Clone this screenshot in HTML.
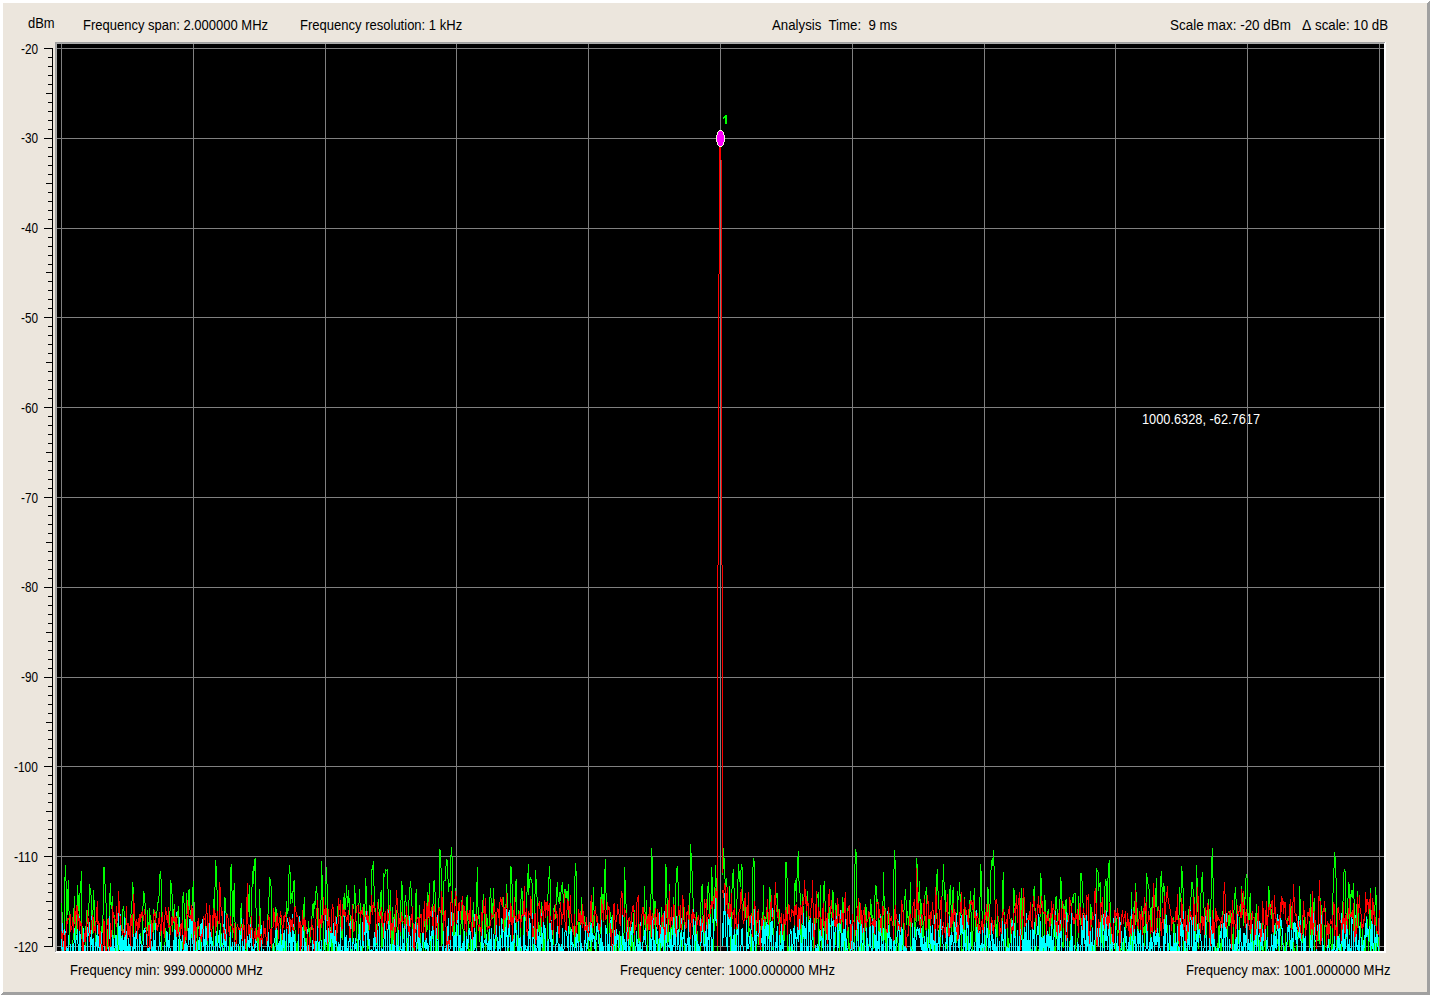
<!DOCTYPE html><html><head><meta charset="utf-8"><style>html,body{margin:0;padding:0;background:#ECE6DD;}body{width:1430px;height:995px;overflow:hidden;position:relative}svg{position:absolute;left:0;top:0}text{font-family:"Liberation Sans",sans-serif;font-size:14px}</style></head><body><svg width="1430" height="995" viewBox="0 0 1430 995" shape-rendering="crispEdges"><rect x="0" y="0" width="1430" height="995" fill="#ECE6DD"/><polygon fill="#FFFFFF" points="0,0 1430,0 1427,3 3,3 3,992 0,995"/><polygon fill="#A0A0A0" points="1430,0 1430,995 0,995 3,992 1427,992 1427,3"/><rect x="55" y="42" width="1331" height="911" fill="#FFFFFF"/><rect x="55" y="42" width="1330" height="910" fill="#A0A0A0"/><rect x="56" y="43" width="1329" height="909" fill="#FFFFFF"/><rect x="56" y="43" width="1328" height="908" fill="#ABABAB"/><rect x="57" y="44" width="1327" height="907" fill="#000000"/><text x="1142" y="424" textLength="118.04" lengthAdjust="spacingAndGlyphs" fill="#FFFFFF">1000.6328, -62.7617</text><path fill="#808080" d="M57 48h1327v1h-1327zM61 44h1v907h-1zM57 138h1327v1h-1327zM193 44h1v907h-1zM57 228h1327v1h-1327zM325 44h1v907h-1zM57 317h1327v1h-1327zM456 44h1v907h-1zM57 407h1327v1h-1327zM588 44h1v907h-1zM57 497h1327v1h-1327zM720 44h1v907h-1zM57 587h1327v1h-1327zM852 44h1v907h-1zM57 677h1327v1h-1327zM984 44h1v907h-1zM57 766h1327v1h-1327zM1115 44h1v907h-1zM57 856h1327v1h-1327zM1247 44h1v907h-1zM57 946h1327v1h-1327zM1379 44h1v907h-1z"/><path fill="#00FF00" d="M61 903h1v9h-1zM62 912h1v39h-1zM63 941h1v10h-1zM64 877h1v64h-1zM65 865h1v16h-1zM66 881h1v52h-1zM67 889h1v26h-1zM68 880h1v31h-1zM69 911h1v34h-1zM70 945h1v6h-1zM72 940h1v11h-1zM73 908h1v32h-1zM74 896h1v28h-1zM75 924h1v17h-1zM76 912h1v22h-1zM77 885h1v27h-1zM78 895h1v16h-1zM79 893h1v25h-1zM80 881h1v12h-1zM81 871h1v55h-1zM82 926h1v25h-1zM85 926h1v25h-1zM86 910h1v16h-1zM87 914h1v10h-1zM88 903h1v13h-1zM89 884h1v19h-1zM90 888h1v7h-1zM91 895h1v47h-1zM92 910h1v24h-1zM93 890h1v20h-1zM94 900h1v26h-1zM95 926h1v25h-1zM99 941h1v10h-1zM100 942h1v2h-1zM101 926h1v16h-1zM102 915h1v18h-1zM103 867h1v48h-1zM104 867h1v17h-1zM105 884h1v19h-1zM106 903h1v26h-1zM107 929h1v20h-1zM108 919h1v31h-1zM109 893h1v26h-1zM110 883h1v22h-1zM111 902h1v7h-1zM112 896h1v55h-1zM113 935h1v16h-1zM114 915h1v23h-1zM115 938h1v13h-1zM116 947h1v4h-1zM117 923h1v24h-1zM118 911h1v40h-1zM120 925h1v26h-1zM121 936h1v15h-1zM122 909h1v42h-1zM123 906h1v5h-1zM124 911h1v7h-1zM125 918h1v22h-1zM126 940h1v11h-1zM130 914h1v37h-1zM131 901h1v13h-1zM132 882h1v19h-1zM133 887h1v64h-1zM139 937h1v14h-1zM140 933h1v11h-1zM141 941h1v10h-1zM142 906h1v35h-1zM143 891h1v15h-1zM144 893h1v10h-1zM145 903h1v26h-1zM146 929h1v5h-1zM147 910h1v21h-1zM148 922h1v12h-1zM149 908h1v28h-1zM150 915h1v26h-1zM151 941h1v10h-1zM152 947h1v4h-1zM153 909h1v38h-1zM154 920h1v10h-1zM155 912h1v9h-1zM156 911h1v7h-1zM157 902h1v9h-1zM158 896h1v7h-1zM159 874h1v22h-1zM160 871h1v8h-1zM161 879h1v71h-1zM162 950h1v1h-1zM164 942h1v9h-1zM165 928h1v14h-1zM166 942h1v9h-1zM168 947h1v4h-1zM169 911h1v36h-1zM170 880h1v31h-1zM171 883h1v11h-1zM172 894h1v38h-1zM173 909h1v14h-1zM174 904h1v38h-1zM175 942h1v9h-1zM176 918h1v33h-1zM177 911h1v7h-1zM178 906h1v31h-1zM179 937h1v14h-1zM181 949h1v2h-1zM182 896h1v53h-1zM183 892h1v11h-1zM184 903h1v48h-1zM185 919h1v32h-1zM186 893h1v26h-1zM187 915h1v16h-1zM188 890h1v26h-1zM189 889h1v21h-1zM190 910h1v30h-1zM191 906h1v32h-1zM192 887h1v19h-1zM193 881h1v21h-1zM194 902h1v34h-1zM195 936h1v15h-1zM196 941h1v10h-1zM197 924h1v27h-1zM198 925h1v4h-1zM199 929h1v7h-1zM200 936h1v15h-1zM205 922h1v29h-1zM206 926h1v13h-1zM207 927h1v22h-1zM208 930h1v3h-1zM209 931h1v19h-1zM210 933h1v8h-1zM211 941h1v10h-1zM212 950h1v1h-1zM213 899h1v51h-1zM214 887h1v24h-1zM215 860h1v27h-1zM216 866h1v24h-1zM217 890h1v61h-1zM220 923h1v28h-1zM221 933h1v10h-1zM222 943h1v8h-1zM223 948h1v3h-1zM224 897h1v51h-1zM225 898h1v15h-1zM226 913h1v38h-1zM229 937h1v14h-1zM230 867h1v70h-1zM231 864h1v27h-1zM232 891h1v47h-1zM233 890h1v27h-1zM234 883h1v39h-1zM235 922h1v18h-1zM236 940h1v11h-1zM239 946h1v5h-1zM240 908h1v38h-1zM241 903h1v21h-1zM242 924h1v27h-1zM244 939h1v12h-1zM245 950h1v1h-1zM246 919h1v32h-1zM247 912h1v10h-1zM248 894h1v18h-1zM249 885h1v32h-1zM250 917h1v18h-1zM251 887h1v52h-1zM252 871h1v16h-1zM253 866h1v18h-1zM254 859h1v12h-1zM255 858h1v50h-1zM256 908h1v29h-1zM257 937h1v14h-1zM258 924h1v27h-1zM259 889h1v35h-1zM260 908h1v28h-1zM261 936h1v15h-1zM267 914h1v37h-1zM268 897h1v17h-1zM269 877h1v20h-1zM270 879h1v7h-1zM271 886h1v58h-1zM272 944h1v7h-1zM274 946h1v5h-1zM275 907h1v39h-1zM276 909h1v21h-1zM277 930h1v21h-1zM279 944h1v7h-1zM280 918h1v26h-1zM281 934h1v15h-1zM282 936h1v6h-1zM283 942h1v9h-1zM285 941h1v10h-1zM286 901h1v40h-1zM287 908h1v6h-1zM288 874h1v37h-1zM289 865h1v9h-1zM290 872h1v32h-1zM291 893h1v6h-1zM292 891h1v12h-1zM293 881h1v11h-1zM294 880h1v50h-1zM295 930h1v21h-1zM296 943h1v8h-1zM297 941h1v10h-1zM300 926h1v25h-1zM301 928h1v12h-1zM302 931h1v20h-1zM303 904h1v27h-1zM304 897h1v41h-1zM305 938h1v13h-1zM306 938h1v13h-1zM307 932h1v11h-1zM308 921h1v11h-1zM309 928h1v23h-1zM310 930h1v13h-1zM311 916h1v14h-1zM312 904h1v12h-1zM313 903h1v15h-1zM314 901h1v8h-1zM315 891h1v14h-1zM316 886h1v7h-1zM317 893h1v58h-1zM319 941h1v10h-1zM320 900h1v41h-1zM321 861h1v39h-1zM322 875h1v46h-1zM323 921h1v30h-1zM325 881h1v70h-1zM326 867h1v17h-1zM327 884h1v67h-1zM328 939h1v12h-1zM329 918h1v33h-1zM330 927h1v13h-1zM331 929h1v22h-1zM332 940h1v11h-1zM333 927h1v22h-1zM334 949h1v2h-1zM336 917h1v34h-1zM337 906h1v11h-1zM338 906h1v12h-1zM339 915h1v1h-1zM340 915h1v36h-1zM341 916h1v22h-1zM342 917h1v23h-1zM343 897h1v20h-1zM344 893h1v24h-1zM345 898h1v12h-1zM346 885h1v13h-1zM347 896h1v11h-1zM348 890h1v13h-1zM349 898h1v17h-1zM350 915h1v36h-1zM351 949h1v2h-1zM352 904h1v45h-1zM353 904h1v5h-1zM354 885h1v19h-1zM355 893h1v28h-1zM356 921h1v20h-1zM357 939h1v12h-1zM358 903h1v43h-1zM359 889h1v14h-1zM360 903h1v48h-1zM362 924h1v27h-1zM363 904h1v20h-1zM364 904h1v15h-1zM365 878h1v26h-1zM366 886h1v27h-1zM367 913h1v38h-1zM368 923h1v26h-1zM369 905h1v18h-1zM370 906h1v12h-1zM371 869h1v37h-1zM372 865h1v5h-1zM373 861h1v25h-1zM374 886h1v22h-1zM375 908h1v16h-1zM376 924h1v21h-1zM377 903h1v48h-1zM378 899h1v10h-1zM379 909h1v35h-1zM380 892h1v27h-1zM381 890h1v61h-1zM382 912h1v35h-1zM383 873h1v39h-1zM384 874h1v3h-1zM385 869h1v5h-1zM386 870h1v1h-1zM387 869h1v20h-1zM388 889h1v41h-1zM389 907h1v44h-1zM390 890h1v36h-1zM391 926h1v25h-1zM392 907h1v44h-1zM393 917h1v27h-1zM394 914h1v37h-1zM395 914h1v2h-1zM396 910h1v17h-1zM397 927h1v24h-1zM399 947h1v4h-1zM400 900h1v47h-1zM401 881h1v19h-1zM402 885h1v43h-1zM403 928h1v11h-1zM404 901h1v41h-1zM405 895h1v7h-1zM406 902h1v49h-1zM407 938h1v13h-1zM408 900h1v38h-1zM409 887h1v13h-1zM410 881h1v7h-1zM411 888h1v18h-1zM412 906h1v37h-1zM413 943h1v8h-1zM414 928h1v23h-1zM415 893h1v35h-1zM416 889h1v34h-1zM417 923h1v26h-1zM418 935h1v16h-1zM419 905h1v30h-1zM420 933h1v18h-1zM423 915h1v36h-1zM424 913h1v14h-1zM425 927h1v24h-1zM426 903h1v29h-1zM427 892h1v38h-1zM428 895h1v23h-1zM429 883h1v54h-1zM430 937h1v14h-1zM431 939h1v12h-1zM432 904h1v35h-1zM433 881h1v23h-1zM434 880h1v12h-1zM435 892h1v59h-1zM437 941h1v10h-1zM438 898h1v43h-1zM439 849h1v49h-1zM440 850h1v18h-1zM441 868h1v78h-1zM442 923h1v21h-1zM443 881h1v42h-1zM444 880h1v1h-1zM445 866h1v15h-1zM446 859h1v7h-1zM447 860h1v19h-1zM448 879h1v13h-1zM449 883h1v4h-1zM450 855h1v31h-1zM451 847h1v10h-1zM452 857h1v56h-1zM453 913h1v30h-1zM454 906h1v45h-1zM455 888h1v18h-1zM456 895h1v35h-1zM457 925h1v11h-1zM458 914h1v28h-1zM459 942h1v9h-1zM460 924h1v27h-1zM461 900h1v24h-1zM462 896h1v33h-1zM463 929h1v22h-1zM466 897h1v54h-1zM467 895h1v26h-1zM468 921h1v30h-1zM469 949h1v2h-1zM470 938h1v13h-1zM472 910h1v41h-1zM473 902h1v21h-1zM474 923h1v21h-1zM475 932h1v10h-1zM476 882h1v69h-1zM477 867h1v40h-1zM478 907h1v12h-1zM479 915h1v27h-1zM480 942h1v9h-1zM481 930h1v21h-1zM482 900h1v30h-1zM483 894h1v19h-1zM484 906h1v32h-1zM485 925h1v26h-1zM486 914h1v11h-1zM487 918h1v14h-1zM488 932h1v12h-1zM489 897h1v50h-1zM490 888h1v10h-1zM491 898h1v22h-1zM492 903h1v16h-1zM493 888h1v26h-1zM494 914h1v20h-1zM495 934h1v15h-1zM496 933h1v8h-1zM497 939h1v12h-1zM500 935h1v16h-1zM501 923h1v12h-1zM502 919h1v5h-1zM503 897h1v22h-1zM504 907h1v30h-1zM505 904h1v47h-1zM506 884h1v20h-1zM507 893h1v27h-1zM508 920h1v31h-1zM509 913h1v24h-1zM510 866h1v47h-1zM511 867h1v17h-1zM512 884h1v51h-1zM513 935h1v16h-1zM514 902h1v49h-1zM515 881h1v21h-1zM516 879h1v66h-1zM517 935h1v16h-1zM518 910h1v34h-1zM519 944h1v7h-1zM520 899h1v52h-1zM521 888h1v11h-1zM522 891h1v24h-1zM523 915h1v32h-1zM524 921h1v30h-1zM525 916h1v5h-1zM526 892h1v31h-1zM527 873h1v19h-1zM528 864h1v31h-1zM529 879h1v9h-1zM530 877h1v3h-1zM531 879h1v4h-1zM532 883h1v61h-1zM533 944h1v7h-1zM534 894h1v57h-1zM535 870h1v24h-1zM536 879h1v18h-1zM537 897h1v45h-1zM538 922h1v10h-1zM539 925h1v14h-1zM540 918h1v18h-1zM541 902h1v31h-1zM542 933h1v18h-1zM543 917h1v34h-1zM544 930h1v21h-1zM547 894h1v57h-1zM548 877h1v17h-1zM549 866h1v13h-1zM550 879h1v42h-1zM551 921h1v30h-1zM552 945h1v6h-1zM553 908h1v37h-1zM554 905h1v7h-1zM555 905h1v14h-1zM556 887h1v18h-1zM557 882h1v15h-1zM558 897h1v5h-1zM559 892h1v12h-1zM560 892h1v9h-1zM561 885h1v7h-1zM562 882h1v12h-1zM563 894h1v11h-1zM564 889h1v19h-1zM565 889h1v9h-1zM566 891h1v7h-1zM567 891h1v8h-1zM568 884h1v34h-1zM569 918h1v16h-1zM570 927h1v24h-1zM572 949h1v2h-1zM574 876h1v75h-1zM575 863h1v13h-1zM576 871h1v80h-1zM578 922h1v29h-1zM579 922h1v20h-1zM580 924h1v27h-1zM581 897h1v27h-1zM582 911h1v13h-1zM583 916h1v7h-1zM584 916h1v13h-1zM585 922h1v22h-1zM586 944h1v7h-1zM588 937h1v14h-1zM589 949h1v2h-1zM590 918h1v33h-1zM591 926h1v25h-1zM592 902h1v35h-1zM593 887h1v23h-1zM594 910h1v23h-1zM595 933h1v9h-1zM596 942h1v9h-1zM599 934h1v17h-1zM600 897h1v37h-1zM601 887h1v37h-1zM602 894h1v15h-1zM603 894h1v28h-1zM604 869h1v31h-1zM605 859h1v34h-1zM606 893h1v17h-1zM607 910h1v41h-1zM609 917h1v34h-1zM610 912h1v7h-1zM611 919h1v30h-1zM612 915h1v18h-1zM613 912h1v27h-1zM614 939h1v12h-1zM615 930h1v18h-1zM616 942h1v9h-1zM618 948h1v3h-1zM619 931h1v17h-1zM620 937h1v14h-1zM621 936h1v12h-1zM622 944h1v7h-1zM623 933h1v18h-1zM624 867h1v66h-1zM625 880h1v24h-1zM626 904h1v31h-1zM627 920h1v14h-1zM628 923h1v25h-1zM629 927h1v18h-1zM630 943h1v8h-1zM631 933h1v14h-1zM632 933h1v18h-1zM633 913h1v20h-1zM634 910h1v41h-1zM637 943h1v8h-1zM638 922h1v21h-1zM639 932h1v9h-1zM640 939h1v12h-1zM642 943h1v8h-1zM643 910h1v33h-1zM644 886h1v26h-1zM645 912h1v26h-1zM646 900h1v25h-1zM647 924h1v27h-1zM649 940h1v11h-1zM650 894h1v46h-1zM651 848h1v46h-1zM652 857h1v42h-1zM653 899h1v51h-1zM654 901h1v24h-1zM655 901h1v50h-1zM657 932h1v19h-1zM658 939h1v12h-1zM660 926h1v25h-1zM661 907h1v19h-1zM662 916h1v25h-1zM663 941h1v10h-1zM664 927h1v24h-1zM665 864h1v63h-1zM666 867h1v31h-1zM667 898h1v53h-1zM668 904h1v38h-1zM669 884h1v39h-1zM670 923h1v22h-1zM671 927h1v14h-1zM672 917h1v18h-1zM673 897h1v20h-1zM674 907h1v27h-1zM675 883h1v68h-1zM676 868h1v15h-1zM677 866h1v16h-1zM678 882h1v31h-1zM679 910h1v22h-1zM680 932h1v19h-1zM681 930h1v17h-1zM682 909h1v21h-1zM683 905h1v15h-1zM684 920h1v31h-1zM688 919h1v32h-1zM689 893h1v26h-1zM690 844h1v49h-1zM691 853h1v18h-1zM692 871h1v27h-1zM693 898h1v27h-1zM694 925h1v26h-1zM695 937h1v14h-1zM696 912h1v25h-1zM697 931h1v20h-1zM700 902h1v49h-1zM701 886h1v16h-1zM702 884h1v31h-1zM703 915h1v24h-1zM704 932h1v17h-1zM705 934h1v6h-1zM706 910h1v36h-1zM707 886h1v24h-1zM708 882h1v11h-1zM709 893h1v33h-1zM710 909h1v15h-1zM711 867h1v42h-1zM712 877h1v46h-1zM713 923h1v28h-1zM714 887h1v44h-1zM715 865h1v22h-1zM716 878h1v48h-1zM717 926h1v25h-1zM722 869h1v6h-1zM723 848h1v21h-1zM724 858h1v21h-1zM725 879h1v13h-1zM726 878h1v9h-1zM727 887h1v41h-1zM728 903h1v21h-1zM729 886h1v47h-1zM730 933h1v18h-1zM731 889h1v62h-1zM732 873h1v16h-1zM733 869h1v19h-1zM734 888h1v50h-1zM735 934h1v12h-1zM736 899h1v35h-1zM737 879h1v20h-1zM738 864h1v15h-1zM739 871h1v11h-1zM740 870h1v17h-1zM741 864h1v6h-1zM742 867h1v34h-1zM743 901h1v10h-1zM744 911h1v8h-1zM745 907h1v11h-1zM746 908h1v21h-1zM747 906h1v7h-1zM748 899h1v38h-1zM749 928h1v4h-1zM750 929h1v22h-1zM751 934h1v17h-1zM752 867h1v67h-1zM753 858h1v9h-1zM754 861h1v53h-1zM755 914h1v37h-1zM756 923h1v28h-1zM757 911h1v12h-1zM758 916h1v29h-1zM759 922h1v11h-1zM760 926h1v25h-1zM762 912h1v39h-1zM763 885h1v31h-1zM764 916h1v24h-1zM765 917h1v26h-1zM766 907h1v10h-1zM767 907h1v16h-1zM768 923h1v16h-1zM769 887h1v49h-1zM770 889h1v32h-1zM771 921h1v30h-1zM772 947h1v3h-1zM773 928h1v23h-1zM774 900h1v28h-1zM775 894h1v10h-1zM776 893h1v5h-1zM777 893h1v25h-1zM778 916h1v8h-1zM779 909h1v22h-1zM780 931h1v12h-1zM781 943h1v8h-1zM783 928h1v23h-1zM784 919h1v22h-1zM785 862h1v57h-1zM786 862h1v16h-1zM787 878h1v73h-1zM788 947h1v4h-1zM789 935h1v16h-1zM790 946h1v5h-1zM793 950h1v1h-1zM794 883h1v67h-1zM795 880h1v11h-1zM796 878h1v24h-1zM797 857h1v21h-1zM798 851h1v30h-1zM799 881h1v12h-1zM800 893h1v51h-1zM801 924h1v23h-1zM802 894h1v30h-1zM803 906h1v33h-1zM804 939h1v12h-1zM806 901h1v50h-1zM807 891h1v13h-1zM808 904h1v47h-1zM813 937h1v14h-1zM814 918h1v19h-1zM815 921h1v2h-1zM816 898h1v25h-1zM817 894h1v4h-1zM818 892h1v57h-1zM819 929h1v22h-1zM820 885h1v44h-1zM821 923h1v28h-1zM822 918h1v21h-1zM823 885h1v36h-1zM824 881h1v20h-1zM825 901h1v50h-1zM827 922h1v29h-1zM828 910h1v12h-1zM829 907h1v19h-1zM830 925h1v2h-1zM831 912h1v22h-1zM832 890h1v22h-1zM833 892h1v54h-1zM834 945h1v6h-1zM835 903h1v42h-1zM836 905h1v11h-1zM837 916h1v25h-1zM838 923h1v11h-1zM839 918h1v33h-1zM841 916h1v35h-1zM842 897h1v19h-1zM843 902h1v27h-1zM844 929h1v22h-1zM845 937h1v14h-1zM846 938h1v13h-1zM847 908h1v30h-1zM848 927h1v22h-1zM849 943h1v8h-1zM853 950h1v1h-1zM854 864h1v86h-1zM855 849h1v15h-1zM856 852h1v56h-1zM857 908h1v33h-1zM858 924h1v27h-1zM859 902h1v22h-1zM860 912h1v39h-1zM861 940h1v11h-1zM862 919h1v21h-1zM863 934h1v17h-1zM864 931h1v20h-1zM865 904h1v27h-1zM866 907h1v36h-1zM867 943h1v8h-1zM868 944h1v7h-1zM869 915h1v29h-1zM870 899h1v16h-1zM871 904h1v14h-1zM872 915h1v17h-1zM873 932h1v17h-1zM874 895h1v51h-1zM875 885h1v10h-1zM876 886h1v18h-1zM877 899h1v5h-1zM878 904h1v30h-1zM879 920h1v21h-1zM880 914h1v18h-1zM881 932h1v19h-1zM882 901h1v40h-1zM883 872h1v29h-1zM884 896h1v44h-1zM885 908h1v43h-1zM886 930h1v21h-1zM887 924h1v27h-1zM888 907h1v17h-1zM889 913h1v38h-1zM893 869h1v82h-1zM894 850h1v19h-1zM895 860h1v84h-1zM896 940h1v11h-1zM897 924h1v19h-1zM898 943h1v8h-1zM900 947h1v4h-1zM901 920h1v31h-1zM902 930h1v20h-1zM903 910h1v41h-1zM904 896h1v14h-1zM905 889h1v11h-1zM906 900h1v25h-1zM907 911h1v7h-1zM908 916h1v20h-1zM909 900h1v26h-1zM910 882h1v64h-1zM911 946h1v5h-1zM912 945h1v6h-1zM914 918h1v33h-1zM915 922h1v15h-1zM916 858h1v64h-1zM917 864h1v28h-1zM918 892h1v29h-1zM919 881h1v20h-1zM920 899h1v21h-1zM921 903h1v23h-1zM922 926h1v23h-1zM923 921h1v17h-1zM924 895h1v26h-1zM925 891h1v4h-1zM926 887h1v50h-1zM927 937h1v14h-1zM928 903h1v38h-1zM929 919h1v24h-1zM930 943h1v8h-1zM931 946h1v2h-1zM932 944h1v6h-1zM933 941h1v3h-1zM934 942h1v9h-1zM935 919h1v32h-1zM936 874h1v45h-1zM937 869h1v22h-1zM938 891h1v18h-1zM939 909h1v42h-1zM940 928h1v19h-1zM941 896h1v32h-1zM942 880h1v16h-1zM943 864h1v18h-1zM944 882h1v18h-1zM945 890h1v39h-1zM946 929h1v20h-1zM947 913h1v24h-1zM948 912h1v2h-1zM949 889h1v27h-1zM950 885h1v20h-1zM951 905h1v36h-1zM952 890h1v27h-1zM953 887h1v45h-1zM954 932h1v11h-1zM955 927h1v22h-1zM956 915h1v28h-1zM957 891h1v24h-1zM958 896h1v4h-1zM959 882h1v14h-1zM960 894h1v22h-1zM961 916h1v35h-1zM962 949h1v2h-1zM963 915h1v34h-1zM964 897h1v33h-1zM965 930h1v21h-1zM966 933h1v18h-1zM967 936h1v14h-1zM968 918h1v33h-1zM969 900h1v18h-1zM970 891h1v21h-1zM971 912h1v34h-1zM972 931h1v20h-1zM973 895h1v36h-1zM974 888h1v23h-1zM975 911h1v31h-1zM976 940h1v11h-1zM977 924h1v16h-1zM978 924h1v7h-1zM979 897h1v27h-1zM980 864h1v33h-1zM981 871h1v40h-1zM982 911h1v40h-1zM983 946h1v5h-1zM984 909h1v37h-1zM985 935h1v16h-1zM986 913h1v38h-1zM987 887h1v26h-1zM988 889h1v62h-1zM989 904h1v35h-1zM990 870h1v34h-1zM991 860h1v10h-1zM992 858h1v8h-1zM993 850h1v16h-1zM994 866h1v34h-1zM995 900h1v33h-1zM996 924h1v13h-1zM997 912h1v39h-1zM1001 921h1v30h-1zM1002 880h1v41h-1zM1003 872h1v40h-1zM1004 912h1v34h-1zM1005 946h1v5h-1zM1007 927h1v24h-1zM1008 938h1v13h-1zM1009 943h1v8h-1zM1010 922h1v21h-1zM1011 918h1v33h-1zM1013 888h1v63h-1zM1014 890h1v16h-1zM1015 906h1v45h-1zM1019 933h1v18h-1zM1020 898h1v35h-1zM1021 888h1v41h-1zM1022 916h1v26h-1zM1023 898h1v18h-1zM1024 905h1v38h-1zM1025 935h1v16h-1zM1026 915h1v36h-1zM1028 940h1v11h-1zM1031 949h1v2h-1zM1032 904h1v45h-1zM1033 889h1v15h-1zM1034 886h1v22h-1zM1035 908h1v26h-1zM1036 934h1v17h-1zM1038 949h1v2h-1zM1039 917h1v32h-1zM1040 873h1v44h-1zM1041 878h1v30h-1zM1042 908h1v43h-1zM1043 941h1v10h-1zM1044 895h1v46h-1zM1045 900h1v16h-1zM1046 916h1v13h-1zM1047 911h1v9h-1zM1048 909h1v9h-1zM1049 918h1v25h-1zM1050 943h1v8h-1zM1051 907h1v40h-1zM1052 910h1v19h-1zM1053 929h1v18h-1zM1054 947h1v4h-1zM1055 897h1v54h-1zM1056 896h1v13h-1zM1057 909h1v42h-1zM1059 899h1v52h-1zM1060 877h1v22h-1zM1061 881h1v61h-1zM1062 942h1v5h-1zM1063 904h1v44h-1zM1064 906h1v14h-1zM1065 900h1v32h-1zM1066 899h1v14h-1zM1067 913h1v38h-1zM1069 941h1v10h-1zM1070 924h1v17h-1zM1071 903h1v21h-1zM1072 897h1v6h-1zM1073 894h1v9h-1zM1074 893h1v1h-1zM1075 893h1v56h-1zM1076 949h1v2h-1zM1077 938h1v13h-1zM1078 896h1v42h-1zM1079 906h1v14h-1zM1080 873h1v52h-1zM1081 873h1v8h-1zM1082 881h1v22h-1zM1083 903h1v11h-1zM1084 914h1v28h-1zM1085 942h1v9h-1zM1086 933h1v18h-1zM1087 929h1v7h-1zM1088 936h1v13h-1zM1089 941h1v10h-1zM1090 904h1v37h-1zM1091 907h1v20h-1zM1092 927h1v24h-1zM1094 948h1v3h-1zM1095 940h1v11h-1zM1096 868h1v72h-1zM1097 870h1v2h-1zM1098 872h1v19h-1zM1099 883h1v4h-1zM1100 882h1v33h-1zM1101 915h1v28h-1zM1102 940h1v11h-1zM1103 935h1v13h-1zM1104 886h1v49h-1zM1105 879h1v7h-1zM1106 881h1v32h-1zM1107 878h1v34h-1zM1108 863h1v15h-1zM1109 860h1v42h-1zM1110 902h1v43h-1zM1111 945h1v6h-1zM1115 922h1v29h-1zM1116 918h1v12h-1zM1117 930h1v12h-1zM1118 925h1v8h-1zM1119 932h1v19h-1zM1120 948h1v3h-1zM1121 934h1v14h-1zM1122 942h1v9h-1zM1124 936h1v15h-1zM1125 911h1v32h-1zM1126 943h1v8h-1zM1129 941h1v10h-1zM1130 916h1v34h-1zM1131 892h1v39h-1zM1132 931h1v20h-1zM1133 907h1v44h-1zM1134 901h1v12h-1zM1135 883h1v42h-1zM1136 892h1v16h-1zM1137 908h1v21h-1zM1138 929h1v22h-1zM1140 917h1v34h-1zM1141 906h1v11h-1zM1142 911h1v28h-1zM1143 927h1v6h-1zM1144 926h1v20h-1zM1145 903h1v30h-1zM1146 873h1v30h-1zM1147 877h1v7h-1zM1148 884h1v5h-1zM1149 889h1v19h-1zM1150 908h1v40h-1zM1151 907h1v25h-1zM1152 897h1v36h-1zM1153 933h1v8h-1zM1154 907h1v36h-1zM1155 888h1v19h-1zM1156 878h1v29h-1zM1157 907h1v35h-1zM1158 941h1v10h-1zM1159 917h1v24h-1zM1160 876h1v41h-1zM1161 871h1v16h-1zM1162 887h1v16h-1zM1163 883h1v9h-1zM1164 886h1v21h-1zM1165 907h1v19h-1zM1166 915h1v10h-1zM1167 925h1v21h-1zM1168 946h1v5h-1zM1169 940h1v10h-1zM1170 946h1v5h-1zM1173 917h1v34h-1zM1174 924h1v22h-1zM1175 941h1v10h-1zM1176 942h1v9h-1zM1177 924h1v27h-1zM1178 915h1v29h-1zM1179 887h1v28h-1zM1180 893h1v9h-1zM1181 866h1v27h-1zM1182 871h1v17h-1zM1183 888h1v63h-1zM1184 947h1v4h-1zM1185 934h1v17h-1zM1186 948h1v3h-1zM1187 927h1v24h-1zM1188 909h1v18h-1zM1189 909h1v19h-1zM1190 897h1v16h-1zM1191 882h1v15h-1zM1192 882h1v7h-1zM1193 889h1v16h-1zM1194 897h1v24h-1zM1195 915h1v25h-1zM1196 865h1v50h-1zM1197 878h1v34h-1zM1198 912h1v37h-1zM1199 927h1v11h-1zM1200 893h1v40h-1zM1201 877h1v16h-1zM1202 872h1v20h-1zM1203 892h1v16h-1zM1204 908h1v17h-1zM1205 925h1v13h-1zM1206 922h1v19h-1zM1207 904h1v18h-1zM1208 899h1v10h-1zM1209 909h1v31h-1zM1210 899h1v52h-1zM1211 857h1v42h-1zM1212 848h1v30h-1zM1213 878h1v49h-1zM1214 927h1v24h-1zM1216 948h1v3h-1zM1217 943h1v8h-1zM1218 926h1v25h-1zM1219 925h1v18h-1zM1220 943h1v8h-1zM1221 927h1v24h-1zM1222 911h1v16h-1zM1223 925h1v14h-1zM1224 918h1v13h-1zM1225 931h1v20h-1zM1227 926h1v25h-1zM1228 915h1v11h-1zM1229 911h1v15h-1zM1230 917h1v6h-1zM1231 913h1v21h-1zM1232 934h1v14h-1zM1233 910h1v41h-1zM1234 893h1v17h-1zM1235 887h1v12h-1zM1236 899h1v28h-1zM1237 927h1v24h-1zM1238 930h1v14h-1zM1239 917h1v13h-1zM1240 904h1v13h-1zM1241 886h1v18h-1zM1242 893h1v20h-1zM1243 909h1v17h-1zM1244 897h1v12h-1zM1245 878h1v21h-1zM1246 874h1v4h-1zM1247 878h1v35h-1zM1248 913h1v9h-1zM1249 897h1v23h-1zM1250 893h1v20h-1zM1251 913h1v31h-1zM1252 944h1v7h-1zM1253 941h1v10h-1zM1254 929h1v12h-1zM1255 913h1v16h-1zM1256 904h1v21h-1zM1257 925h1v21h-1zM1258 938h1v8h-1zM1259 940h1v11h-1zM1260 950h1v1h-1zM1261 928h1v22h-1zM1262 916h1v35h-1zM1263 946h1v5h-1zM1264 925h1v21h-1zM1265 938h1v13h-1zM1266 947h1v4h-1zM1267 915h1v32h-1zM1268 886h1v29h-1zM1269 890h1v14h-1zM1270 904h1v11h-1zM1271 909h1v10h-1zM1272 900h1v13h-1zM1273 913h1v23h-1zM1274 925h1v26h-1zM1275 923h1v11h-1zM1276 934h1v16h-1zM1277 939h1v5h-1zM1278 943h1v8h-1zM1279 927h1v24h-1zM1280 922h1v14h-1zM1281 936h1v14h-1zM1282 943h1v1h-1zM1283 943h1v8h-1zM1284 947h1v4h-1zM1285 933h1v18h-1zM1286 945h1v6h-1zM1287 918h1v27h-1zM1288 925h1v7h-1zM1289 928h1v19h-1zM1290 908h1v20h-1zM1291 906h1v10h-1zM1292 916h1v13h-1zM1293 929h1v22h-1zM1294 948h1v3h-1zM1296 945h1v6h-1zM1297 930h1v15h-1zM1298 920h1v19h-1zM1299 886h1v34h-1zM1300 899h1v37h-1zM1301 933h1v18h-1zM1302 935h1v8h-1zM1303 920h1v29h-1zM1304 917h1v11h-1zM1305 928h1v23h-1zM1309 921h1v30h-1zM1310 894h1v27h-1zM1311 919h1v24h-1zM1312 917h1v29h-1zM1313 902h1v15h-1zM1314 898h1v53h-1zM1316 935h1v16h-1zM1317 934h1v7h-1zM1318 928h1v13h-1zM1319 933h1v11h-1zM1320 898h1v35h-1zM1321 905h1v15h-1zM1322 920h1v30h-1zM1323 950h1v1h-1zM1324 925h1v26h-1zM1325 908h1v17h-1zM1326 925h1v23h-1zM1327 923h1v12h-1zM1328 923h1v23h-1zM1329 939h1v9h-1zM1330 926h1v18h-1zM1331 944h1v7h-1zM1332 893h1v58h-1zM1333 868h1v25h-1zM1334 852h1v16h-1zM1335 857h1v21h-1zM1336 878h1v73h-1zM1337 950h1v1h-1zM1338 938h1v12h-1zM1339 934h1v17h-1zM1341 940h1v11h-1zM1342 901h1v39h-1zM1343 872h1v29h-1zM1344 869h1v3h-1zM1345 871h1v43h-1zM1346 914h1v25h-1zM1347 898h1v50h-1zM1348 882h1v16h-1zM1349 884h1v51h-1zM1350 894h1v22h-1zM1351 890h1v7h-1zM1352 890h1v8h-1zM1353 883h1v16h-1zM1354 899h1v37h-1zM1355 935h1v16h-1zM1356 904h1v31h-1zM1357 891h1v22h-1zM1358 910h1v18h-1zM1359 928h1v19h-1zM1360 922h1v16h-1zM1361 914h1v14h-1zM1362 928h1v23h-1zM1364 941h1v10h-1zM1365 923h1v28h-1zM1366 916h1v7h-1zM1367 919h1v18h-1zM1368 937h1v14h-1zM1369 906h1v36h-1zM1370 888h1v42h-1zM1371 930h1v21h-1zM1374 905h1v46h-1zM1375 887h1v18h-1zM1376 895h1v56h-1zM1378 937h1v14h-1zM1379 949h1v2h-1z"/><path fill="#00FFFF" d="M61 936h1v13h-1zM62 923h1v28h-1zM63 941h1v10h-1zM64 929h1v12h-1zM65 931h1v16h-1zM66 947h1v4h-1zM67 948h1v3h-1zM68 935h1v16h-1zM70 944h1v7h-1zM72 944h1v7h-1zM73 943h1v8h-1zM74 928h1v15h-1zM75 940h1v11h-1zM76 935h1v5h-1zM77 927h1v17h-1zM78 944h1v7h-1zM79 916h1v35h-1zM80 934h1v17h-1zM83 928h1v23h-1zM84 945h1v6h-1zM85 946h1v5h-1zM87 927h1v24h-1zM88 930h1v6h-1zM89 922h1v18h-1zM90 937h1v14h-1zM91 916h1v29h-1zM92 939h1v12h-1zM93 938h1v13h-1zM95 942h1v9h-1zM96 935h1v11h-1zM97 925h1v26h-1zM98 936h1v12h-1zM99 938h1v13h-1zM100 943h1v8h-1zM101 932h1v19h-1zM104 938h1v13h-1zM105 950h1v1h-1zM106 949h1v2h-1zM108 926h1v25h-1zM109 916h1v23h-1zM110 939h1v12h-1zM111 947h1v4h-1zM112 935h1v16h-1zM113 939h1v12h-1zM114 948h1v3h-1zM115 935h1v13h-1zM116 935h1v16h-1zM117 945h1v6h-1zM118 913h1v32h-1zM119 926h1v24h-1zM120 914h1v37h-1zM121 938h1v13h-1zM122 934h1v17h-1zM123 940h1v10h-1zM124 917h1v34h-1zM125 934h1v17h-1zM126 931h1v20h-1zM127 946h1v5h-1zM128 938h1v13h-1zM129 944h1v7h-1zM130 927h1v24h-1zM132 947h1v4h-1zM133 934h1v17h-1zM134 937h1v12h-1zM135 924h1v27h-1zM136 931h1v8h-1zM137 939h1v12h-1zM139 934h1v17h-1zM140 936h1v8h-1zM141 944h1v7h-1zM142 945h1v6h-1zM143 930h1v15h-1zM144 928h1v5h-1zM145 930h1v2h-1zM146 929h1v16h-1zM147 945h1v6h-1zM148 948h1v3h-1zM149 931h1v20h-1zM150 924h1v17h-1zM151 941h1v10h-1zM152 947h1v4h-1zM153 933h1v18h-1zM154 940h1v11h-1zM155 919h1v32h-1zM156 950h1v1h-1zM158 946h1v5h-1zM159 932h1v14h-1zM160 942h1v9h-1zM164 945h1v6h-1zM166 931h1v20h-1zM167 932h1v15h-1zM168 940h1v11h-1zM169 934h1v14h-1zM170 948h1v3h-1zM173 940h1v11h-1zM174 929h1v22h-1zM175 927h1v24h-1zM176 912h1v39h-1zM178 939h1v12h-1zM179 917h1v22h-1zM180 939h1v12h-1zM181 941h1v10h-1zM182 921h1v21h-1zM183 942h1v9h-1zM184 929h1v22h-1zM185 941h1v10h-1zM186 943h1v8h-1zM187 945h1v6h-1zM188 928h1v17h-1zM189 919h1v21h-1zM190 919h1v32h-1zM191 913h1v21h-1zM192 920h1v24h-1zM193 944h1v7h-1zM194 935h1v16h-1zM195 925h1v17h-1zM196 942h1v9h-1zM197 950h1v1h-1zM198 940h1v10h-1zM199 937h1v13h-1zM200 924h1v13h-1zM201 923h1v28h-1zM202 919h1v18h-1zM203 929h1v17h-1zM204 939h1v12h-1zM205 918h1v33h-1zM206 928h1v17h-1zM207 945h1v6h-1zM209 919h1v32h-1zM210 932h1v12h-1zM211 932h1v19h-1zM212 941h1v5h-1zM213 946h1v5h-1zM215 936h1v15h-1zM216 931h1v15h-1zM217 943h1v8h-1zM218 935h1v8h-1zM219 930h1v18h-1zM220 947h1v4h-1zM221 934h1v13h-1zM222 945h1v6h-1zM223 924h1v21h-1zM224 911h1v40h-1zM225 929h1v18h-1zM226 923h1v28h-1zM228 946h1v5h-1zM230 932h1v19h-1zM231 947h1v4h-1zM232 942h1v9h-1zM234 938h1v13h-1zM235 950h1v1h-1zM236 939h1v12h-1zM238 944h1v7h-1zM239 928h1v16h-1zM240 935h1v16h-1zM241 918h1v21h-1zM242 928h1v23h-1zM243 946h1v5h-1zM244 934h1v17h-1zM247 936h1v15h-1zM248 940h1v7h-1zM249 934h1v14h-1zM250 924h1v19h-1zM251 930h1v21h-1zM252 946h1v5h-1zM253 949h1v2h-1zM254 944h1v7h-1zM255 933h1v15h-1zM256 938h1v5h-1zM257 943h1v7h-1zM258 950h1v1h-1zM259 931h1v20h-1zM260 929h1v5h-1zM261 925h1v26h-1zM263 949h1v2h-1zM267 940h1v11h-1zM268 932h1v15h-1zM269 947h1v4h-1zM273 943h1v8h-1zM274 938h1v5h-1zM275 930h1v8h-1zM276 924h1v27h-1zM277 945h1v5h-1zM278 943h1v8h-1zM279 941h1v10h-1zM280 929h1v22h-1zM281 945h1v6h-1zM282 930h1v21h-1zM283 933h1v15h-1zM284 930h1v21h-1zM286 920h1v31h-1zM287 918h1v4h-1zM288 922h1v29h-1zM289 923h1v20h-1zM290 921h1v30h-1zM291 937h1v14h-1zM292 914h1v37h-1zM293 924h1v18h-1zM294 934h1v17h-1zM295 941h1v10h-1zM298 917h1v34h-1zM299 916h1v10h-1zM300 926h1v25h-1zM301 949h1v2h-1zM302 927h1v22h-1zM303 931h1v7h-1zM304 938h1v13h-1zM305 942h1v9h-1zM306 946h1v5h-1zM307 929h1v22h-1zM308 945h1v6h-1zM312 940h1v11h-1zM313 933h1v16h-1zM314 944h1v7h-1zM315 928h1v23h-1zM316 941h1v10h-1zM317 926h1v16h-1zM318 942h1v9h-1zM319 929h1v22h-1zM320 949h1v2h-1zM321 940h1v11h-1zM323 950h1v1h-1zM324 939h1v11h-1zM325 914h1v28h-1zM326 930h1v15h-1zM327 920h1v19h-1zM328 928h1v14h-1zM329 942h1v9h-1zM330 930h1v17h-1zM331 926h1v13h-1zM332 933h1v10h-1zM333 923h1v28h-1zM334 931h1v20h-1zM335 930h1v14h-1zM336 917h1v30h-1zM337 947h1v4h-1zM338 942h1v9h-1zM339 944h1v7h-1zM340 927h1v24h-1zM341 950h1v1h-1zM342 946h1v5h-1zM344 912h1v39h-1zM345 937h1v14h-1zM346 935h1v16h-1zM347 948h1v3h-1zM348 941h1v10h-1zM349 923h1v19h-1zM350 921h1v30h-1zM352 942h1v9h-1zM353 938h1v6h-1zM354 944h1v7h-1zM355 938h1v11h-1zM356 943h1v8h-1zM358 934h1v17h-1zM359 924h1v16h-1zM360 940h1v11h-1zM361 946h1v5h-1zM362 922h1v24h-1zM363 935h1v13h-1zM364 921h1v14h-1zM365 912h1v39h-1zM366 911h1v22h-1zM367 921h1v19h-1zM368 931h1v15h-1zM369 939h1v12h-1zM370 950h1v1h-1zM371 949h1v2h-1zM372 950h1v1h-1zM373 938h1v12h-1zM374 932h1v15h-1zM375 937h1v14h-1zM376 949h1v2h-1zM377 925h1v26h-1zM378 923h1v3h-1zM379 926h1v25h-1zM381 948h1v3h-1zM382 949h1v2h-1zM383 939h1v12h-1zM384 918h1v21h-1zM385 931h1v20h-1zM387 929h1v22h-1zM388 910h1v19h-1zM389 925h1v26h-1zM390 944h1v7h-1zM391 950h1v1h-1zM392 944h1v7h-1zM393 940h1v11h-1zM394 919h1v32h-1zM396 933h1v18h-1zM397 945h1v6h-1zM398 930h1v21h-1zM399 950h1v1h-1zM400 936h1v14h-1zM401 949h1v2h-1zM402 924h1v27h-1zM403 943h1v8h-1zM404 926h1v25h-1zM405 915h1v11h-1zM406 924h1v19h-1zM407 943h1v8h-1zM408 929h1v22h-1zM409 916h1v20h-1zM410 936h1v15h-1zM412 929h1v22h-1zM413 926h1v3h-1zM414 924h1v27h-1zM415 922h1v20h-1zM416 942h1v9h-1zM417 925h1v18h-1zM418 927h1v24h-1zM419 930h1v21h-1zM420 943h1v8h-1zM421 948h1v3h-1zM422 932h1v16h-1zM423 928h1v14h-1zM424 942h1v6h-1zM425 930h1v20h-1zM426 938h1v11h-1zM427 943h1v8h-1zM428 945h1v6h-1zM429 930h1v15h-1zM430 936h1v5h-1zM431 931h1v20h-1zM432 911h1v25h-1zM433 928h1v23h-1zM436 928h1v23h-1zM437 915h1v25h-1zM438 940h1v11h-1zM442 946h1v5h-1zM443 931h1v20h-1zM445 948h1v3h-1zM446 943h1v8h-1zM447 926h1v17h-1zM448 918h1v33h-1zM449 949h1v2h-1zM450 926h1v23h-1zM451 912h1v14h-1zM452 911h1v25h-1zM453 936h1v15h-1zM454 935h1v16h-1zM455 932h1v15h-1zM456 908h1v43h-1zM457 916h1v7h-1zM458 911h1v40h-1zM459 935h1v13h-1zM460 935h1v16h-1zM461 948h1v3h-1zM462 943h1v8h-1zM463 941h1v10h-1zM464 931h1v20h-1zM466 936h1v15h-1zM467 939h1v10h-1zM468 930h1v13h-1zM469 928h1v7h-1zM470 931h1v8h-1zM471 939h1v12h-1zM473 937h1v14h-1zM474 914h1v36h-1zM475 934h1v14h-1zM476 948h1v3h-1zM481 921h1v30h-1zM482 929h1v19h-1zM483 943h1v8h-1zM484 940h1v3h-1zM485 939h1v5h-1zM486 934h1v11h-1zM487 943h1v8h-1zM488 941h1v9h-1zM489 928h1v23h-1zM490 939h1v11h-1zM491 928h1v23h-1zM493 934h1v17h-1zM494 939h1v12h-1zM495 915h1v24h-1zM496 919h1v18h-1zM497 937h1v14h-1zM498 941h1v10h-1zM499 921h1v28h-1zM500 938h1v13h-1zM501 918h1v20h-1zM502 929h1v19h-1zM503 911h1v21h-1zM504 932h1v15h-1zM505 927h1v24h-1zM506 909h1v28h-1zM507 935h1v16h-1zM508 912h1v36h-1zM509 910h1v25h-1zM510 935h1v16h-1zM511 942h1v9h-1zM512 925h1v26h-1zM513 939h1v12h-1zM514 918h1v25h-1zM515 923h1v10h-1zM516 930h1v16h-1zM517 946h1v5h-1zM518 916h1v35h-1zM519 938h1v13h-1zM520 937h1v11h-1zM521 947h1v4h-1zM523 935h1v16h-1zM524 910h1v41h-1zM525 945h1v5h-1zM526 949h1v2h-1zM527 946h1v5h-1zM528 931h1v20h-1zM529 918h1v21h-1zM530 923h1v28h-1zM532 913h1v38h-1zM533 926h1v13h-1zM534 939h1v12h-1zM535 945h1v6h-1zM536 948h1v3h-1zM537 921h1v27h-1zM538 936h1v15h-1zM539 932h1v19h-1zM540 937h1v14h-1zM541 913h1v31h-1zM542 933h1v15h-1zM543 911h1v22h-1zM544 925h1v14h-1zM545 928h1v23h-1zM547 941h1v10h-1zM548 939h1v12h-1zM549 918h1v21h-1zM550 923h1v19h-1zM551 920h1v31h-1zM552 939h1v12h-1zM555 944h1v7h-1zM556 932h1v13h-1zM557 920h1v23h-1zM558 943h1v8h-1zM559 944h1v7h-1zM560 947h1v4h-1zM561 944h1v7h-1zM562 928h1v23h-1zM563 949h1v2h-1zM564 932h1v17h-1zM565 925h1v7h-1zM566 921h1v15h-1zM567 936h1v12h-1zM568 926h1v25h-1zM570 931h1v20h-1zM571 929h1v16h-1zM572 942h1v9h-1zM573 944h1v3h-1zM574 947h1v4h-1zM575 933h1v15h-1zM576 929h1v22h-1zM577 934h1v9h-1zM578 941h1v10h-1zM580 924h1v27h-1zM581 943h1v8h-1zM582 948h1v3h-1zM584 940h1v11h-1zM585 925h1v18h-1zM586 943h1v8h-1zM587 933h1v16h-1zM588 927h1v13h-1zM589 933h1v8h-1zM590 925h1v22h-1zM591 923h1v17h-1zM592 933h1v9h-1zM593 935h1v4h-1zM594 936h1v13h-1zM595 940h1v11h-1zM596 926h1v14h-1zM597 918h1v14h-1zM598 923h1v21h-1zM599 944h1v7h-1zM600 938h1v13h-1zM601 920h1v31h-1zM602 942h1v9h-1zM603 946h1v5h-1zM605 925h1v26h-1zM606 928h1v6h-1zM607 934h1v17h-1zM608 944h1v7h-1zM609 933h1v18h-1zM610 920h1v17h-1zM611 917h1v34h-1zM612 944h1v7h-1zM613 928h1v23h-1zM614 930h1v16h-1zM615 927h1v24h-1zM616 929h1v15h-1zM617 934h1v6h-1zM618 935h1v13h-1zM619 948h1v3h-1zM620 936h1v15h-1zM621 945h1v6h-1zM622 911h1v34h-1zM623 936h1v15h-1zM624 939h1v11h-1zM625 942h1v9h-1zM626 920h1v31h-1zM627 927h1v8h-1zM628 935h1v16h-1zM629 946h1v5h-1zM630 931h1v15h-1zM631 927h1v8h-1zM632 922h1v20h-1zM633 942h1v9h-1zM635 946h1v5h-1zM636 931h1v15h-1zM637 939h1v12h-1zM638 944h1v7h-1zM639 941h1v10h-1zM640 922h1v29h-1zM641 949h1v2h-1zM642 942h1v9h-1zM643 936h1v6h-1zM644 930h1v10h-1zM645 928h1v17h-1zM646 945h1v6h-1zM649 931h1v20h-1zM650 938h1v12h-1zM651 939h1v12h-1zM652 918h1v22h-1zM653 918h1v33h-1zM654 940h1v11h-1zM655 944h1v7h-1zM656 927h1v17h-1zM657 931h1v13h-1zM658 944h1v7h-1zM659 912h1v39h-1zM660 925h1v18h-1zM661 922h1v26h-1zM662 927h1v19h-1zM663 928h1v23h-1zM664 911h1v17h-1zM665 922h1v29h-1zM666 924h1v19h-1zM667 943h1v8h-1zM668 945h1v2h-1zM669 932h1v16h-1zM670 939h1v12h-1zM671 929h1v22h-1zM672 945h1v6h-1zM673 914h1v33h-1zM674 928h1v17h-1zM675 934h1v17h-1zM676 916h1v18h-1zM677 930h1v20h-1zM678 929h1v16h-1zM679 945h1v6h-1zM680 933h1v18h-1zM681 918h1v22h-1zM682 937h1v14h-1zM683 932h1v7h-1zM684 925h1v20h-1zM685 943h1v8h-1zM686 944h1v7h-1zM687 938h1v7h-1zM688 920h1v31h-1zM689 937h1v14h-1zM690 945h1v6h-1zM692 935h1v16h-1zM693 909h1v26h-1zM694 935h1v16h-1zM695 921h1v20h-1zM696 921h1v30h-1zM697 941h1v10h-1zM698 944h1v7h-1zM699 946h1v5h-1zM700 918h1v28h-1zM701 931h1v12h-1zM702 918h1v14h-1zM703 932h1v14h-1zM704 944h1v7h-1zM705 931h1v15h-1zM706 925h1v26h-1zM707 937h1v14h-1zM708 919h1v21h-1zM709 924h1v27h-1zM710 917h1v20h-1zM711 937h1v14h-1zM712 939h1v12h-1zM713 919h1v20h-1zM714 903h1v16h-1zM715 894h1v27h-1zM716 919h1v4h-1zM717 901h1v30h-1zM722 923h1v23h-1zM723 911h1v27h-1zM724 893h1v22h-1zM725 907h1v30h-1zM726 937h1v10h-1zM727 914h1v37h-1zM728 912h1v13h-1zM729 915h1v22h-1zM730 911h1v25h-1zM731 927h1v24h-1zM732 939h1v12h-1zM733 935h1v16h-1zM734 929h1v22h-1zM735 945h1v6h-1zM736 930h1v21h-1zM737 929h1v6h-1zM738 924h1v27h-1zM740 945h1v6h-1zM741 929h1v16h-1zM742 928h1v18h-1zM743 946h1v5h-1zM746 915h1v36h-1zM747 932h1v17h-1zM748 944h1v5h-1zM749 936h1v8h-1zM750 930h1v17h-1zM751 914h1v16h-1zM752 923h1v28h-1zM753 941h1v10h-1zM754 909h1v32h-1zM755 935h1v16h-1zM756 927h1v17h-1zM757 935h1v1h-1zM758 928h1v9h-1zM759 920h1v21h-1zM760 940h1v11h-1zM761 938h1v5h-1zM762 924h1v23h-1zM763 915h1v36h-1zM764 929h1v15h-1zM765 926h1v25h-1zM766 922h1v14h-1zM767 924h1v26h-1zM768 917h1v19h-1zM769 936h1v15h-1zM770 922h1v20h-1zM771 921h1v30h-1zM772 908h1v27h-1zM773 935h1v16h-1zM775 942h1v9h-1zM776 931h1v17h-1zM777 926h1v25h-1zM779 928h1v23h-1zM780 945h1v6h-1zM781 921h1v30h-1zM782 935h1v14h-1zM783 940h1v11h-1zM789 934h1v17h-1zM790 929h1v5h-1zM791 931h1v20h-1zM792 944h1v7h-1zM793 928h1v16h-1zM794 926h1v25h-1zM795 933h1v6h-1zM796 937h1v14h-1zM797 920h1v19h-1zM798 918h1v24h-1zM799 908h1v27h-1zM800 935h1v16h-1zM801 943h1v8h-1zM802 925h1v26h-1zM803 913h1v24h-1zM804 926h1v25h-1zM805 928h1v11h-1zM806 917h1v34h-1zM807 946h1v5h-1zM808 922h1v29h-1zM809 920h1v12h-1zM810 909h1v42h-1zM811 940h1v11h-1zM812 923h1v17h-1zM813 913h1v11h-1zM814 924h1v21h-1zM815 945h1v6h-1zM816 948h1v3h-1zM817 944h1v7h-1zM818 946h1v5h-1zM819 931h1v15h-1zM820 930h1v11h-1zM821 932h1v8h-1zM822 938h1v10h-1zM823 928h1v23h-1zM825 940h1v11h-1zM826 919h1v21h-1zM827 940h1v11h-1zM828 919h1v21h-1zM829 923h1v28h-1zM830 939h1v12h-1zM831 918h1v21h-1zM832 921h1v5h-1zM833 920h1v31h-1zM834 932h1v16h-1zM835 919h1v13h-1zM836 916h1v5h-1zM837 921h1v30h-1zM838 930h1v18h-1zM839 920h1v11h-1zM840 910h1v23h-1zM841 933h1v18h-1zM842 933h1v14h-1zM843 920h1v31h-1zM844 929h1v12h-1zM845 918h1v33h-1zM846 939h1v11h-1zM847 948h1v3h-1zM850 920h1v31h-1zM851 935h1v15h-1zM852 926h1v16h-1zM853 942h1v7h-1zM854 943h1v8h-1zM856 929h1v22h-1zM857 920h1v9h-1zM858 922h1v25h-1zM859 947h1v4h-1zM860 926h1v25h-1zM861 924h1v19h-1zM862 943h1v8h-1zM863 928h1v17h-1zM864 945h1v6h-1zM866 928h1v23h-1zM867 938h1v13h-1zM868 946h1v5h-1zM869 927h1v19h-1zM870 922h1v26h-1zM871 948h1v3h-1zM872 919h1v32h-1zM873 918h1v15h-1zM874 919h1v29h-1zM875 935h1v16h-1zM876 921h1v30h-1zM877 941h1v10h-1zM878 931h1v18h-1zM879 932h1v19h-1zM880 916h1v20h-1zM881 936h1v15h-1zM882 944h1v7h-1zM883 928h1v23h-1zM885 943h1v8h-1zM887 911h1v40h-1zM888 925h1v13h-1zM889 932h1v19h-1zM890 937h1v12h-1zM891 939h1v12h-1zM893 928h1v23h-1zM894 940h1v11h-1zM895 946h1v5h-1zM896 937h1v9h-1zM897 931h1v6h-1zM898 921h1v10h-1zM899 914h1v37h-1zM900 935h1v16h-1zM901 910h1v41h-1zM902 929h1v16h-1zM903 945h1v6h-1zM904 947h1v4h-1zM905 938h1v13h-1zM906 946h1v5h-1zM910 947h1v4h-1zM911 949h1v2h-1zM912 923h1v26h-1zM913 938h1v13h-1zM914 927h1v24h-1zM915 940h1v11h-1zM916 929h1v11h-1zM917 927h1v4h-1zM918 929h1v6h-1zM919 928h1v10h-1zM920 917h1v30h-1zM921 928h1v22h-1zM922 937h1v14h-1zM923 944h1v7h-1zM924 936h1v15h-1zM925 942h1v9h-1zM926 931h1v20h-1zM927 948h1v3h-1zM928 929h1v19h-1zM929 944h1v7h-1zM930 920h1v24h-1zM931 933h1v16h-1zM932 925h1v26h-1zM933 940h1v11h-1zM934 915h1v30h-1zM935 925h1v26h-1zM936 943h1v8h-1zM937 943h1v8h-1zM938 930h1v14h-1zM939 937h1v14h-1zM940 919h1v18h-1zM941 924h1v6h-1zM942 926h1v18h-1zM943 944h1v7h-1zM945 942h1v9h-1zM946 927h1v17h-1zM947 933h1v18h-1zM949 916h1v35h-1zM950 935h1v16h-1zM951 932h1v13h-1zM952 935h1v7h-1zM953 942h1v9h-1zM954 922h1v21h-1zM955 913h1v38h-1zM956 913h1v22h-1zM957 927h1v14h-1zM958 938h1v10h-1zM959 935h1v16h-1zM960 918h1v17h-1zM961 915h1v18h-1zM962 925h1v9h-1zM963 932h1v19h-1zM964 930h1v17h-1zM965 943h1v8h-1zM966 913h1v38h-1zM967 921h1v7h-1zM968 924h1v27h-1zM969 943h1v8h-1zM970 932h1v17h-1zM971 949h1v2h-1zM973 950h1v1h-1zM974 942h1v9h-1zM976 910h1v41h-1zM977 930h1v21h-1zM978 926h1v25h-1zM979 931h1v17h-1zM980 945h1v6h-1zM981 943h1v8h-1zM982 926h1v22h-1zM983 944h1v7h-1zM984 927h1v20h-1zM985 946h1v5h-1zM986 923h1v23h-1zM987 928h1v10h-1zM988 938h1v13h-1zM989 934h1v14h-1zM990 941h1v10h-1zM991 922h1v19h-1zM992 934h1v16h-1zM993 939h1v12h-1zM994 944h1v7h-1zM995 929h1v22h-1zM996 947h1v4h-1zM997 938h1v13h-1zM999 941h1v10h-1zM1001 927h1v24h-1zM1002 921h1v20h-1zM1003 939h1v12h-1zM1004 917h1v22h-1zM1005 923h1v24h-1zM1006 947h1v4h-1zM1007 947h1v4h-1zM1008 948h1v3h-1zM1009 944h1v7h-1zM1011 923h1v28h-1zM1012 920h1v6h-1zM1013 914h1v37h-1zM1014 923h1v15h-1zM1015 936h1v15h-1zM1017 930h1v21h-1zM1018 946h1v5h-1zM1019 936h1v15h-1zM1020 929h1v15h-1zM1021 921h1v19h-1zM1022 940h1v11h-1zM1023 939h1v12h-1zM1024 917h1v34h-1zM1025 932h1v19h-1zM1026 913h1v38h-1zM1027 940h1v11h-1zM1028 919h1v32h-1zM1029 940h1v11h-1zM1030 930h1v21h-1zM1032 925h1v26h-1zM1033 930h1v9h-1zM1034 922h1v29h-1zM1035 946h1v5h-1zM1036 935h1v11h-1zM1037 926h1v9h-1zM1038 914h1v21h-1zM1039 935h1v16h-1zM1040 921h1v30h-1zM1041 937h1v14h-1zM1042 938h1v13h-1zM1043 936h1v12h-1zM1044 935h1v16h-1zM1045 943h1v8h-1zM1046 925h1v26h-1zM1047 931h1v15h-1zM1048 934h1v17h-1zM1049 936h1v12h-1zM1050 936h1v15h-1zM1051 924h1v27h-1zM1052 940h1v11h-1zM1053 937h1v14h-1zM1054 913h1v24h-1zM1055 911h1v10h-1zM1056 921h1v18h-1zM1057 939h1v12h-1zM1058 925h1v25h-1zM1059 910h1v41h-1zM1060 920h1v18h-1zM1061 931h1v20h-1zM1065 932h1v19h-1zM1066 912h1v20h-1zM1067 920h1v31h-1zM1069 947h1v4h-1zM1070 940h1v11h-1zM1071 910h1v41h-1zM1072 936h1v15h-1zM1074 945h1v6h-1zM1077 942h1v9h-1zM1078 944h1v7h-1zM1080 945h1v6h-1zM1081 926h1v19h-1zM1082 920h1v31h-1zM1083 915h1v23h-1zM1084 917h1v27h-1zM1085 940h1v11h-1zM1086 910h1v41h-1zM1087 921h1v25h-1zM1088 930h1v21h-1zM1089 943h1v8h-1zM1090 922h1v29h-1zM1091 942h1v9h-1zM1092 928h1v18h-1zM1093 945h1v6h-1zM1094 940h1v11h-1zM1095 914h1v26h-1zM1096 908h1v20h-1zM1097 928h1v11h-1zM1098 937h1v9h-1zM1099 926h1v11h-1zM1100 922h1v29h-1zM1102 909h1v42h-1zM1103 914h1v17h-1zM1104 931h1v20h-1zM1105 917h1v24h-1zM1106 911h1v30h-1zM1107 936h1v14h-1zM1108 923h1v13h-1zM1109 911h1v40h-1zM1110 944h1v7h-1zM1111 932h1v17h-1zM1112 939h1v12h-1zM1113 918h1v27h-1zM1114 943h1v6h-1zM1115 926h1v17h-1zM1116 943h1v8h-1zM1117 936h1v15h-1zM1118 946h1v5h-1zM1119 917h1v29h-1zM1120 922h1v9h-1zM1121 931h1v19h-1zM1122 950h1v1h-1zM1123 938h1v13h-1zM1124 927h1v11h-1zM1125 930h1v13h-1zM1126 936h1v13h-1zM1127 949h1v2h-1zM1128 942h1v9h-1zM1129 928h1v23h-1zM1130 945h1v6h-1zM1131 909h1v42h-1zM1132 925h1v16h-1zM1133 940h1v11h-1zM1134 927h1v17h-1zM1135 936h1v15h-1zM1136 944h1v7h-1zM1137 929h1v15h-1zM1138 931h1v20h-1zM1139 933h1v11h-1zM1140 922h1v29h-1zM1142 924h1v27h-1zM1143 943h1v8h-1zM1145 949h1v2h-1zM1146 913h1v36h-1zM1147 926h1v23h-1zM1148 949h1v2h-1zM1149 942h1v9h-1zM1150 938h1v13h-1zM1151 937h1v12h-1zM1152 942h1v9h-1zM1153 932h1v10h-1zM1154 931h1v20h-1zM1155 936h1v9h-1zM1156 933h1v12h-1zM1157 928h1v14h-1zM1158 933h1v18h-1zM1159 937h1v11h-1zM1160 948h1v3h-1zM1163 936h1v15h-1zM1164 912h1v39h-1zM1165 924h1v20h-1zM1166 915h1v18h-1zM1167 933h1v18h-1zM1168 943h1v8h-1zM1169 925h1v18h-1zM1170 935h1v16h-1zM1171 946h1v5h-1zM1172 947h1v4h-1zM1173 933h1v18h-1zM1174 943h1v8h-1zM1175 933h1v18h-1zM1176 943h1v8h-1zM1177 926h1v20h-1zM1178 946h1v5h-1zM1179 932h1v19h-1zM1180 918h1v18h-1zM1181 919h1v32h-1zM1182 924h1v13h-1zM1183 911h1v30h-1zM1184 941h1v10h-1zM1185 914h1v37h-1zM1186 925h1v14h-1zM1187 939h1v12h-1zM1188 930h1v15h-1zM1189 920h1v30h-1zM1190 910h1v10h-1zM1191 917h1v30h-1zM1192 947h1v4h-1zM1193 917h1v34h-1zM1194 923h1v28h-1zM1195 942h1v9h-1zM1196 934h1v17h-1zM1197 924h1v18h-1zM1198 930h1v13h-1zM1199 928h1v7h-1zM1200 934h1v7h-1zM1201 941h1v10h-1zM1203 948h1v3h-1zM1204 932h1v16h-1zM1205 916h1v19h-1zM1206 935h1v16h-1zM1208 950h1v1h-1zM1209 931h1v20h-1zM1210 917h1v34h-1zM1211 928h1v16h-1zM1212 930h1v21h-1zM1213 932h1v15h-1zM1214 931h1v16h-1zM1215 947h1v4h-1zM1217 948h1v3h-1zM1218 948h1v3h-1zM1219 935h1v13h-1zM1220 931h1v7h-1zM1221 924h1v15h-1zM1222 939h1v8h-1zM1223 923h1v28h-1zM1224 914h1v24h-1zM1225 926h1v25h-1zM1226 913h1v24h-1zM1227 937h1v14h-1zM1229 939h1v12h-1zM1230 944h1v4h-1zM1231 934h1v15h-1zM1232 944h1v7h-1zM1233 950h1v1h-1zM1234 944h1v7h-1zM1235 937h1v14h-1zM1236 937h1v14h-1zM1237 913h1v36h-1zM1238 949h1v2h-1zM1239 930h1v21h-1zM1240 928h1v14h-1zM1241 942h1v9h-1zM1242 946h1v5h-1zM1243 933h1v18h-1zM1244 933h1v14h-1zM1245 935h1v16h-1zM1246 924h1v19h-1zM1247 943h1v8h-1zM1248 939h1v11h-1zM1249 943h1v8h-1zM1250 932h1v19h-1zM1251 942h1v9h-1zM1252 924h1v27h-1zM1254 933h1v18h-1zM1255 929h1v16h-1zM1256 923h1v28h-1zM1257 920h1v15h-1zM1258 935h1v16h-1zM1259 921h1v16h-1zM1260 923h1v28h-1zM1261 930h1v16h-1zM1262 929h1v21h-1zM1263 933h1v8h-1zM1264 925h1v14h-1zM1265 918h1v22h-1zM1266 940h1v11h-1zM1267 937h1v12h-1zM1268 949h1v2h-1zM1270 947h1v4h-1zM1271 934h1v13h-1zM1272 945h1v6h-1zM1273 935h1v16h-1zM1274 925h1v26h-1zM1275 936h1v12h-1zM1276 931h1v18h-1zM1277 914h1v17h-1zM1278 919h1v27h-1zM1279 926h1v25h-1zM1280 912h1v14h-1zM1281 920h1v9h-1zM1282 928h1v17h-1zM1283 945h1v6h-1zM1286 942h1v9h-1zM1287 923h1v19h-1zM1288 925h1v7h-1zM1289 920h1v20h-1zM1290 940h1v11h-1zM1291 919h1v30h-1zM1292 938h1v13h-1zM1293 923h1v19h-1zM1294 922h1v10h-1zM1295 923h1v17h-1zM1296 927h1v17h-1zM1297 937h1v14h-1zM1298 916h1v21h-1zM1299 927h1v11h-1zM1300 920h1v21h-1zM1301 941h1v10h-1zM1303 934h1v17h-1zM1304 938h1v13h-1zM1305 925h1v26h-1zM1309 948h1v3h-1zM1310 925h1v23h-1zM1311 940h1v11h-1zM1312 935h1v16h-1zM1313 913h1v22h-1zM1314 927h1v13h-1zM1315 940h1v2h-1zM1316 940h1v11h-1zM1317 925h1v15h-1zM1318 911h1v14h-1zM1319 924h1v16h-1zM1320 930h1v15h-1zM1321 915h1v23h-1zM1322 938h1v13h-1zM1323 945h1v6h-1zM1327 945h1v6h-1zM1328 929h1v19h-1zM1329 948h1v3h-1zM1331 950h1v1h-1zM1332 949h1v2h-1zM1333 944h1v7h-1zM1334 932h1v18h-1zM1335 950h1v1h-1zM1336 948h1v3h-1zM1337 936h1v15h-1zM1338 936h1v12h-1zM1339 938h1v12h-1zM1340 944h1v7h-1zM1341 913h1v31h-1zM1342 930h1v17h-1zM1343 914h1v37h-1zM1344 939h1v12h-1zM1345 934h1v15h-1zM1346 925h1v12h-1zM1347 928h1v23h-1zM1348 944h1v7h-1zM1349 939h1v12h-1zM1350 948h1v3h-1zM1351 915h1v36h-1zM1352 919h1v5h-1zM1353 924h1v27h-1zM1355 915h1v36h-1zM1356 931h1v16h-1zM1357 945h1v5h-1zM1358 940h1v11h-1zM1359 926h1v25h-1zM1361 937h1v14h-1zM1362 945h1v6h-1zM1363 940h1v11h-1zM1364 935h1v13h-1zM1365 923h1v15h-1zM1366 917h1v20h-1zM1367 928h1v7h-1zM1368 929h1v12h-1zM1369 926h1v3h-1zM1370 929h1v22h-1zM1371 921h1v25h-1zM1372 911h1v38h-1zM1373 943h1v8h-1zM1374 920h1v23h-1zM1375 937h1v14h-1zM1376 934h1v9h-1zM1377 934h1v13h-1zM1378 946h1v5h-1z"/><path fill="#FF0000" d="M61 931h1v8h-1zM62 933h1v14h-1zM63 930h1v5h-1zM64 935h1v16h-1zM65 933h1v17h-1zM66 921h1v12h-1zM67 918h1v6h-1zM68 918h1v2h-1zM69 915h1v3h-1zM70 914h1v18h-1zM71 926h1v4h-1zM72 917h1v9h-1zM73 922h1v11h-1zM74 908h1v14h-1zM75 911h1v15h-1zM76 905h1v10h-1zM77 906h1v23h-1zM78 914h1v7h-1zM79 918h1v13h-1zM80 921h1v5h-1zM81 923h1v16h-1zM82 939h1v12h-1zM83 942h1v9h-1zM84 933h1v9h-1zM85 930h1v12h-1zM86 922h1v15h-1zM87 910h1v12h-1zM88 918h1v15h-1zM89 933h1v9h-1zM90 930h1v4h-1zM91 920h1v10h-1zM92 915h1v5h-1zM93 917h1v16h-1zM94 926h1v5h-1zM95 921h1v12h-1zM96 907h1v15h-1zM97 901h1v23h-1zM98 921h1v13h-1zM99 923h1v24h-1zM100 931h1v13h-1zM101 944h1v7h-1zM102 945h1v6h-1zM103 919h1v26h-1zM104 921h1v25h-1zM105 946h1v5h-1zM106 925h1v26h-1zM107 919h1v6h-1zM108 918h1v29h-1zM109 947h1v4h-1zM110 923h1v24h-1zM111 930h1v7h-1zM112 906h1v24h-1zM113 912h1v6h-1zM114 917h1v2h-1zM115 919h1v5h-1zM116 906h1v21h-1zM117 913h1v8h-1zM118 891h1v22h-1zM119 901h1v15h-1zM120 916h1v9h-1zM121 925h1v6h-1zM122 931h1v4h-1zM123 929h1v4h-1zM124 933h1v4h-1zM125 925h1v10h-1zM126 906h1v19h-1zM127 923h1v16h-1zM128 923h1v12h-1zM129 926h1v11h-1zM130 918h1v28h-1zM131 915h1v11h-1zM132 914h1v23h-1zM133 894h1v20h-1zM134 903h1v18h-1zM135 921h1v12h-1zM136 919h1v7h-1zM137 922h1v17h-1zM138 918h1v12h-1zM139 914h1v14h-1zM140 914h1v8h-1zM141 912h1v6h-1zM142 911h1v5h-1zM143 915h1v6h-1zM144 909h1v6h-1zM145 914h1v13h-1zM146 927h1v7h-1zM147 934h1v14h-1zM148 925h1v11h-1zM149 925h1v22h-1zM150 939h1v10h-1zM151 920h1v19h-1zM152 923h1v9h-1zM153 914h1v9h-1zM154 910h1v6h-1zM155 913h1v10h-1zM156 923h1v7h-1zM157 925h1v6h-1zM158 918h1v9h-1zM159 912h1v12h-1zM160 924h1v12h-1zM161 917h1v14h-1zM162 912h1v10h-1zM163 922h1v12h-1zM164 915h1v23h-1zM165 907h1v8h-1zM166 911h1v9h-1zM167 915h1v8h-1zM168 907h1v21h-1zM169 925h1v2h-1zM170 926h1v9h-1zM171 917h1v9h-1zM172 916h1v9h-1zM173 918h1v3h-1zM174 910h1v12h-1zM175 917h1v13h-1zM176 916h1v21h-1zM177 924h1v10h-1zM178 932h1v4h-1zM179 927h1v5h-1zM180 924h1v12h-1zM181 923h1v6h-1zM182 920h1v15h-1zM183 935h1v15h-1zM184 928h1v16h-1zM185 931h1v6h-1zM186 914h1v26h-1zM187 900h1v14h-1zM188 906h1v11h-1zM189 916h1v2h-1zM190 915h1v4h-1zM191 905h1v16h-1zM192 908h1v13h-1zM193 921h1v19h-1zM194 922h1v9h-1zM195 922h1v28h-1zM196 927h1v11h-1zM197 921h1v6h-1zM198 918h1v8h-1zM199 926h1v10h-1zM200 936h1v3h-1zM201 934h1v8h-1zM202 929h1v8h-1zM203 916h1v13h-1zM204 918h1v2h-1zM205 914h1v12h-1zM206 903h1v11h-1zM207 913h1v28h-1zM208 923h1v15h-1zM209 905h1v18h-1zM210 915h1v15h-1zM211 929h1v8h-1zM212 915h1v14h-1zM213 908h1v18h-1zM214 910h1v8h-1zM215 913h1v20h-1zM216 916h1v11h-1zM217 911h1v10h-1zM218 921h1v3h-1zM219 882h1v42h-1zM220 887h1v20h-1zM221 907h1v9h-1zM222 911h1v16h-1zM223 927h1v6h-1zM224 930h1v9h-1zM225 934h1v7h-1zM226 915h1v19h-1zM227 914h1v4h-1zM228 918h1v14h-1zM229 926h1v10h-1zM230 916h1v10h-1zM231 924h1v2h-1zM232 926h1v4h-1zM233 928h1v5h-1zM234 923h1v19h-1zM235 942h1v4h-1zM236 927h1v17h-1zM237 924h1v3h-1zM238 927h1v3h-1zM239 928h1v2h-1zM240 927h1v4h-1zM241 924h1v4h-1zM242 928h1v13h-1zM243 919h1v11h-1zM244 925h1v14h-1zM245 939h1v10h-1zM246 897h1v46h-1zM247 883h1v41h-1zM248 924h1v11h-1zM249 925h1v9h-1zM250 927h1v11h-1zM251 916h1v12h-1zM252 928h1v11h-1zM253 938h1v9h-1zM254 931h1v7h-1zM255 928h1v11h-1zM256 935h1v6h-1zM257 930h1v7h-1zM258 927h1v11h-1zM259 916h1v35h-1zM260 938h1v9h-1zM261 934h1v6h-1zM262 938h1v6h-1zM263 921h1v17h-1zM264 928h1v6h-1zM265 928h1v9h-1zM266 937h1v8h-1zM267 920h1v21h-1zM268 915h1v5h-1zM269 917h1v12h-1zM270 929h1v15h-1zM271 928h1v20h-1zM272 927h1v1h-1zM273 908h1v19h-1zM274 912h1v10h-1zM275 922h1v8h-1zM276 916h1v12h-1zM277 913h1v13h-1zM278 923h1v16h-1zM279 917h1v6h-1zM280 911h1v6h-1zM281 915h1v10h-1zM282 925h1v15h-1zM283 916h1v12h-1zM284 915h1v7h-1zM285 912h1v5h-1zM286 917h1v12h-1zM287 927h1v1h-1zM288 925h1v9h-1zM289 917h1v8h-1zM290 919h1v13h-1zM291 920h1v7h-1zM292 918h1v12h-1zM293 927h1v4h-1zM294 907h1v20h-1zM295 906h1v6h-1zM296 912h1v5h-1zM297 915h1v2h-1zM298 917h1v17h-1zM299 922h1v6h-1zM300 921h1v30h-1zM301 925h1v21h-1zM302 910h1v15h-1zM303 919h1v6h-1zM304 917h1v13h-1zM305 920h1v11h-1zM306 927h1v7h-1zM307 934h1v17h-1zM309 937h1v14h-1zM310 927h1v10h-1zM311 919h1v8h-1zM312 925h1v5h-1zM313 928h1v16h-1zM314 941h1v10h-1zM315 919h1v22h-1zM316 908h1v11h-1zM317 900h1v8h-1zM318 908h1v20h-1zM319 919h1v22h-1zM320 919h1v5h-1zM321 915h1v13h-1zM322 915h1v8h-1zM323 897h1v18h-1zM324 909h1v11h-1zM325 905h1v10h-1zM326 908h1v13h-1zM327 921h1v23h-1zM328 909h1v17h-1zM329 917h1v14h-1zM330 931h1v2h-1zM331 909h1v24h-1zM332 904h1v5h-1zM333 907h1v15h-1zM334 922h1v14h-1zM335 916h1v10h-1zM336 924h1v17h-1zM337 924h1v9h-1zM338 898h1v26h-1zM339 904h1v6h-1zM340 900h1v16h-1zM341 916h1v15h-1zM342 904h1v25h-1zM343 910h1v5h-1zM344 909h1v7h-1zM345 912h1v5h-1zM346 917h1v5h-1zM347 915h1v5h-1zM348 910h1v16h-1zM349 926h1v12h-1zM350 929h1v9h-1zM351 916h1v13h-1zM352 905h1v14h-1zM353 919h1v13h-1zM354 922h1v9h-1zM355 913h1v9h-1zM356 906h1v7h-1zM357 905h1v1h-1zM358 905h1v8h-1zM359 912h1v2h-1zM360 911h1v7h-1zM361 910h1v4h-1zM362 907h1v8h-1zM363 915h1v26h-1zM364 917h1v15h-1zM365 911h1v6h-1zM366 915h1v5h-1zM367 911h1v12h-1zM368 916h1v9h-1zM369 922h1v8h-1zM370 912h1v12h-1zM371 895h1v17h-1zM372 905h1v10h-1zM373 902h1v6h-1zM374 906h1v6h-1zM375 912h1v25h-1zM376 930h1v13h-1zM377 902h1v28h-1zM378 912h1v10h-1zM379 916h1v7h-1zM380 911h1v5h-1zM381 907h1v16h-1zM382 916h1v11h-1zM383 923h1v15h-1zM384 913h1v10h-1zM385 911h1v10h-1zM386 921h1v9h-1zM387 909h1v15h-1zM388 913h1v8h-1zM389 905h1v8h-1zM390 911h1v27h-1zM391 923h1v7h-1zM392 923h1v8h-1zM393 919h1v8h-1zM394 927h1v18h-1zM395 905h1v27h-1zM396 890h1v15h-1zM397 898h1v15h-1zM398 913h1v17h-1zM399 918h1v6h-1zM400 921h1v11h-1zM401 912h1v10h-1zM402 916h1v5h-1zM403 921h1v1h-1zM404 919h1v5h-1zM405 917h1v12h-1zM406 906h1v11h-1zM407 915h1v11h-1zM408 920h1v12h-1zM409 926h1v9h-1zM410 918h1v9h-1zM411 914h1v6h-1zM412 907h1v16h-1zM413 923h1v25h-1zM414 924h1v27h-1zM415 929h1v4h-1zM416 919h1v11h-1zM417 917h1v2h-1zM418 917h1v20h-1zM419 918h1v20h-1zM420 914h1v4h-1zM421 914h1v18h-1zM422 932h1v1h-1zM423 909h1v24h-1zM424 901h1v20h-1zM425 919h1v21h-1zM426 903h1v16h-1zM427 906h1v19h-1zM428 902h1v15h-1zM429 894h1v25h-1zM430 911h1v5h-1zM431 907h1v10h-1zM432 917h1v9h-1zM433 906h1v24h-1zM434 904h1v8h-1zM435 912h1v23h-1zM436 917h1v9h-1zM437 923h1v16h-1zM438 908h1v15h-1zM439 907h1v4h-1zM440 910h1v3h-1zM441 891h1v19h-1zM442 897h1v18h-1zM443 915h1v16h-1zM444 911h1v10h-1zM445 910h1v17h-1zM446 927h1v18h-1zM447 941h1v10h-1zM448 936h1v8h-1zM449 940h1v5h-1zM450 902h1v38h-1zM451 891h1v12h-1zM452 903h1v29h-1zM453 921h1v5h-1zM454 899h1v23h-1zM455 891h1v8h-1zM456 896h1v28h-1zM457 911h1v9h-1zM458 903h1v8h-1zM459 902h1v9h-1zM460 911h1v9h-1zM461 902h1v9h-1zM462 896h1v9h-1zM463 905h1v15h-1zM464 906h1v24h-1zM465 911h1v13h-1zM466 915h1v17h-1zM467 910h1v5h-1zM468 913h1v7h-1zM469 910h1v14h-1zM470 897h1v25h-1zM471 922h1v10h-1zM472 927h1v13h-1zM473 917h1v10h-1zM474 921h1v7h-1zM475 914h1v7h-1zM476 914h1v5h-1zM477 916h1v9h-1zM478 925h1v6h-1zM479 924h1v3h-1zM480 927h1v5h-1zM481 912h1v24h-1zM482 913h1v8h-1zM483 900h1v13h-1zM484 906h1v8h-1zM485 898h1v27h-1zM486 925h1v2h-1zM487 927h1v3h-1zM488 926h1v2h-1zM489 926h1v3h-1zM490 920h1v6h-1zM491 913h1v7h-1zM492 915h1v2h-1zM493 906h1v12h-1zM494 899h1v13h-1zM495 912h1v23h-1zM496 912h1v13h-1zM497 908h1v4h-1zM498 909h1v9h-1zM499 902h1v24h-1zM500 897h1v5h-1zM501 899h1v6h-1zM502 897h1v10h-1zM503 907h1v24h-1zM504 908h1v12h-1zM505 905h1v13h-1zM506 893h1v15h-1zM507 908h1v8h-1zM508 916h1v12h-1zM509 920h1v4h-1zM510 903h1v19h-1zM511 906h1v19h-1zM512 917h1v24h-1zM513 910h1v13h-1zM514 897h1v19h-1zM515 916h1v4h-1zM516 915h1v7h-1zM517 919h1v3h-1zM518 914h1v7h-1zM519 911h1v8h-1zM520 919h1v9h-1zM521 915h1v7h-1zM522 914h1v2h-1zM523 901h1v16h-1zM524 886h1v29h-1zM525 912h1v5h-1zM526 908h1v24h-1zM527 929h1v7h-1zM528 911h1v18h-1zM529 913h1v2h-1zM530 896h1v20h-1zM531 899h1v20h-1zM532 919h1v18h-1zM533 928h1v9h-1zM534 914h1v14h-1zM535 913h1v31h-1zM536 929h1v11h-1zM537 906h1v23h-1zM538 903h1v3h-1zM539 901h1v8h-1zM540 909h1v9h-1zM541 916h1v11h-1zM542 906h1v10h-1zM543 911h1v11h-1zM544 900h1v11h-1zM545 902h1v16h-1zM546 902h1v8h-1zM547 901h1v15h-1zM548 905h1v6h-1zM549 903h1v20h-1zM550 916h1v5h-1zM551 921h1v9h-1zM552 930h1v5h-1zM553 910h1v20h-1zM554 914h1v6h-1zM555 904h1v10h-1zM556 911h1v7h-1zM557 914h1v12h-1zM558 926h1v8h-1zM559 908h1v30h-1zM560 902h1v10h-1zM561 912h1v13h-1zM562 914h1v5h-1zM563 903h1v12h-1zM564 893h1v29h-1zM565 922h1v8h-1zM566 910h1v21h-1zM567 899h1v11h-1zM568 901h1v9h-1zM569 906h1v12h-1zM570 895h1v19h-1zM571 914h1v9h-1zM572 923h1v9h-1zM573 926h1v9h-1zM574 914h1v12h-1zM575 926h1v11h-1zM576 925h1v8h-1zM577 921h1v4h-1zM578 909h1v12h-1zM579 913h1v8h-1zM580 911h1v14h-1zM581 915h1v8h-1zM582 904h1v24h-1zM583 911h1v13h-1zM584 922h1v9h-1zM585 926h1v4h-1zM586 917h1v14h-1zM587 925h1v8h-1zM588 931h1v6h-1zM589 922h1v9h-1zM590 901h1v21h-1zM591 895h1v27h-1zM592 922h1v6h-1zM593 915h1v11h-1zM594 911h1v5h-1zM595 906h1v8h-1zM596 914h1v8h-1zM597 916h1v7h-1zM598 923h1v7h-1zM599 924h1v7h-1zM600 919h1v8h-1zM601 899h1v20h-1zM602 904h1v9h-1zM603 910h1v11h-1zM604 900h1v10h-1zM605 910h1v10h-1zM606 915h1v4h-1zM607 902h1v13h-1zM608 906h1v4h-1zM609 907h1v16h-1zM610 923h1v14h-1zM611 929h1v17h-1zM612 945h1v6h-1zM613 904h1v41h-1zM614 903h1v17h-1zM615 920h1v16h-1zM616 915h1v7h-1zM617 904h1v11h-1zM618 909h1v5h-1zM619 914h1v10h-1zM620 898h1v28h-1zM621 891h1v7h-1zM622 893h1v22h-1zM623 915h1v2h-1zM624 908h1v9h-1zM625 910h1v3h-1zM626 913h1v19h-1zM627 932h1v9h-1zM628 918h1v21h-1zM629 917h1v4h-1zM630 921h1v10h-1zM631 912h1v12h-1zM632 906h1v6h-1zM633 905h1v7h-1zM634 912h1v23h-1zM635 925h1v5h-1zM636 902h1v25h-1zM637 897h1v5h-1zM638 895h1v29h-1zM639 924h1v14h-1zM640 926h1v16h-1zM641 914h1v12h-1zM642 907h1v7h-1zM643 907h1v9h-1zM644 914h1v11h-1zM645 914h1v5h-1zM646 919h1v12h-1zM647 916h1v8h-1zM648 914h1v16h-1zM649 907h1v23h-1zM650 910h1v15h-1zM651 916h1v21h-1zM652 913h1v7h-1zM653 920h1v9h-1zM654 914h1v10h-1zM655 908h1v9h-1zM656 917h1v8h-1zM657 909h1v20h-1zM658 913h1v12h-1zM659 925h1v13h-1zM660 927h1v7h-1zM661 917h1v10h-1zM662 915h1v7h-1zM663 913h1v16h-1zM664 927h1v13h-1zM665 905h1v30h-1zM666 904h1v14h-1zM667 918h1v14h-1zM668 900h1v19h-1zM669 891h1v34h-1zM670 917h1v11h-1zM671 907h1v14h-1zM672 917h1v8h-1zM673 904h1v13h-1zM674 905h1v13h-1zM675 918h1v15h-1zM676 929h1v8h-1zM677 916h1v13h-1zM678 906h1v10h-1zM679 910h1v5h-1zM680 905h1v23h-1zM681 924h1v6h-1zM682 895h1v29h-1zM683 899h1v8h-1zM684 907h1v15h-1zM685 922h1v7h-1zM686 912h1v16h-1zM687 911h1v4h-1zM688 905h1v14h-1zM689 915h1v17h-1zM690 923h1v16h-1zM691 914h1v9h-1zM692 909h1v18h-1zM693 912h1v7h-1zM694 914h1v4h-1zM695 917h1v4h-1zM696 921h1v13h-1zM697 917h1v8h-1zM698 915h1v5h-1zM699 920h1v6h-1zM700 926h1v16h-1zM701 919h1v12h-1zM702 916h1v7h-1zM703 923h1v7h-1zM704 899h1v34h-1zM705 903h1v5h-1zM706 899h1v23h-1zM707 917h1v12h-1zM708 914h1v3h-1zM709 914h1v5h-1zM710 905h1v9h-1zM711 901h1v8h-1zM712 901h1v6h-1zM713 896h1v8h-1zM714 898h1v11h-1zM715 888h1v10h-1zM716 891h1v7h-1zM717 895h1v9h-1zM722 890h1v3h-1zM723 890h1v8h-1zM724 883h1v7h-1zM725 885h1v26h-1zM726 893h1v12h-1zM727 887h1v27h-1zM728 909h1v8h-1zM729 902h1v17h-1zM730 904h1v13h-1zM731 893h1v19h-1zM732 912h1v7h-1zM733 910h1v5h-1zM734 908h1v21h-1zM735 918h1v6h-1zM736 915h1v12h-1zM737 924h1v5h-1zM738 912h1v12h-1zM739 909h1v3h-1zM740 892h1v17h-1zM741 889h1v15h-1zM742 904h1v16h-1zM743 920h1v4h-1zM744 898h1v23h-1zM745 893h1v14h-1zM746 907h1v13h-1zM747 905h1v13h-1zM748 892h1v24h-1zM749 916h1v10h-1zM750 915h1v8h-1zM751 913h1v3h-1zM752 916h1v21h-1zM753 909h1v16h-1zM754 901h1v8h-1zM755 906h1v14h-1zM756 920h1v11h-1zM757 912h1v10h-1zM758 909h1v24h-1zM759 933h1v12h-1zM760 930h1v20h-1zM761 918h1v12h-1zM762 920h1v6h-1zM763 915h1v5h-1zM764 919h1v3h-1zM765 919h1v1h-1zM766 910h1v9h-1zM767 899h1v13h-1zM768 912h1v13h-1zM769 909h1v11h-1zM770 902h1v8h-1zM771 895h1v22h-1zM772 917h1v4h-1zM773 910h1v9h-1zM774 895h1v15h-1zM775 882h1v23h-1zM776 905h1v7h-1zM777 912h1v5h-1zM778 909h1v13h-1zM779 922h1v13h-1zM780 917h1v6h-1zM781 913h1v11h-1zM782 924h1v11h-1zM783 914h1v17h-1zM784 919h1v5h-1zM785 910h1v15h-1zM786 907h1v14h-1zM787 914h1v21h-1zM788 904h1v10h-1zM789 905h1v15h-1zM790 917h1v5h-1zM791 909h1v8h-1zM792 910h1v3h-1zM793 911h1v5h-1zM794 906h1v19h-1zM795 905h1v10h-1zM796 904h1v11h-1zM797 915h1v12h-1zM798 907h1v23h-1zM799 908h1v11h-1zM800 905h1v24h-1zM801 907h1v8h-1zM802 901h1v22h-1zM803 897h1v8h-1zM804 880h1v17h-1zM805 889h1v15h-1zM806 896h1v15h-1zM807 901h1v5h-1zM808 903h1v13h-1zM809 916h1v3h-1zM810 908h1v10h-1zM811 898h1v10h-1zM812 880h1v23h-1zM813 903h1v34h-1zM814 930h1v18h-1zM815 904h1v26h-1zM816 891h1v27h-1zM817 918h1v1h-1zM818 907h1v12h-1zM819 911h1v6h-1zM820 917h1v12h-1zM821 919h1v17h-1zM822 908h1v11h-1zM823 903h1v23h-1zM824 921h1v10h-1zM825 912h1v9h-1zM826 918h1v16h-1zM827 913h1v31h-1zM828 894h1v19h-1zM829 889h1v17h-1zM830 906h1v8h-1zM831 900h1v9h-1zM832 909h1v9h-1zM833 913h1v7h-1zM834 920h1v6h-1zM835 910h1v17h-1zM836 919h1v8h-1zM837 898h1v26h-1zM838 904h1v12h-1zM839 914h1v9h-1zM840 919h1v5h-1zM841 910h1v10h-1zM842 913h1v9h-1zM843 913h1v16h-1zM844 898h1v15h-1zM845 892h1v27h-1zM846 919h1v6h-1zM847 911h1v20h-1zM848 906h1v5h-1zM849 905h1v19h-1zM850 924h1v25h-1zM851 924h1v17h-1zM852 914h1v10h-1zM853 920h1v2h-1zM854 922h1v8h-1zM855 930h1v6h-1zM856 916h1v14h-1zM857 906h1v10h-1zM858 898h1v24h-1zM859 920h1v3h-1zM860 903h1v17h-1zM861 910h1v14h-1zM862 915h1v18h-1zM863 910h1v5h-1zM864 907h1v25h-1zM865 915h1v8h-1zM866 921h1v6h-1zM867 919h1v3h-1zM868 911h1v8h-1zM869 912h1v5h-1zM870 917h1v9h-1zM871 923h1v1h-1zM872 921h1v4h-1zM873 918h1v8h-1zM874 919h1v15h-1zM875 920h1v7h-1zM876 902h1v18h-1zM877 902h1v1h-1zM878 902h1v16h-1zM879 909h1v9h-1zM880 918h1v10h-1zM881 916h1v17h-1zM882 906h1v10h-1zM883 906h1v9h-1zM884 909h1v2h-1zM885 911h1v18h-1zM886 929h1v3h-1zM887 914h1v19h-1zM888 907h1v7h-1zM889 914h1v10h-1zM890 918h1v3h-1zM891 916h1v5h-1zM892 921h1v5h-1zM893 926h1v15h-1zM894 909h1v17h-1zM895 905h1v15h-1zM896 914h1v5h-1zM897 919h1v11h-1zM898 922h1v4h-1zM899 924h1v6h-1zM900 927h1v5h-1zM901 900h1v27h-1zM902 904h1v8h-1zM903 912h1v11h-1zM904 923h1v7h-1zM905 930h1v16h-1zM906 937h1v11h-1zM907 934h1v3h-1zM908 925h1v11h-1zM909 916h1v9h-1zM910 914h1v8h-1zM911 918h1v9h-1zM912 906h1v12h-1zM913 902h1v4h-1zM914 899h1v19h-1zM915 909h1v12h-1zM916 868h1v41h-1zM917 887h1v23h-1zM918 903h1v12h-1zM919 910h1v15h-1zM920 919h1v14h-1zM921 914h1v5h-1zM922 915h1v10h-1zM923 903h1v12h-1zM924 899h1v17h-1zM925 916h1v14h-1zM926 904h1v24h-1zM927 895h1v9h-1zM928 901h1v18h-1zM929 915h1v4h-1zM930 912h1v14h-1zM931 911h1v8h-1zM932 902h1v9h-1zM933 910h1v14h-1zM934 924h1v17h-1zM935 887h1v42h-1zM936 895h1v18h-1zM937 913h1v18h-1zM938 925h1v3h-1zM939 910h1v15h-1zM940 900h1v10h-1zM941 897h1v32h-1zM942 928h1v7h-1zM943 922h1v6h-1zM944 927h1v6h-1zM945 912h1v26h-1zM946 902h1v10h-1zM947 894h1v29h-1zM948 923h1v13h-1zM949 928h1v9h-1zM950 917h1v11h-1zM951 910h1v17h-1zM952 913h1v11h-1zM953 903h1v18h-1zM954 909h1v6h-1zM955 912h1v15h-1zM956 927h1v5h-1zM957 922h1v19h-1zM958 925h1v14h-1zM959 912h1v13h-1zM960 902h1v11h-1zM961 892h1v22h-1zM962 914h1v11h-1zM963 909h1v20h-1zM964 899h1v10h-1zM965 907h1v8h-1zM966 910h1v5h-1zM967 915h1v7h-1zM968 909h1v16h-1zM969 904h1v5h-1zM970 901h1v3h-1zM971 900h1v5h-1zM972 902h1v8h-1zM973 900h1v9h-1zM974 909h1v9h-1zM975 912h1v8h-1zM976 916h1v11h-1zM977 913h1v5h-1zM978 918h1v15h-1zM979 925h1v5h-1zM980 927h1v7h-1zM981 921h1v6h-1zM982 919h1v11h-1zM983 924h1v9h-1zM984 915h1v9h-1zM985 912h1v8h-1zM986 904h1v12h-1zM987 912h1v9h-1zM988 904h1v13h-1zM989 917h1v13h-1zM990 923h1v12h-1zM991 917h1v6h-1zM992 920h1v11h-1zM993 925h1v9h-1zM994 920h1v7h-1zM995 900h1v20h-1zM996 899h1v5h-1zM997 904h1v12h-1zM998 916h1v6h-1zM999 922h1v14h-1zM1000 928h1v4h-1zM1001 918h1v16h-1zM1002 912h1v6h-1zM1003 909h1v6h-1zM1004 915h1v9h-1zM1005 922h1v7h-1zM1006 919h1v5h-1zM1007 914h1v14h-1zM1008 909h1v5h-1zM1009 906h1v13h-1zM1010 919h1v8h-1zM1011 927h1v7h-1zM1012 926h1v4h-1zM1013 913h1v18h-1zM1014 908h1v5h-1zM1015 903h1v13h-1zM1016 895h1v14h-1zM1017 905h1v18h-1zM1018 898h1v7h-1zM1019 892h1v44h-1zM1020 935h1v15h-1zM1021 910h1v25h-1zM1022 898h1v21h-1zM1023 888h1v10h-1zM1024 897h1v30h-1zM1025 923h1v3h-1zM1026 920h1v3h-1zM1027 918h1v2h-1zM1028 915h1v5h-1zM1029 911h1v9h-1zM1030 902h1v19h-1zM1031 921h1v6h-1zM1032 907h1v22h-1zM1033 896h1v11h-1zM1034 901h1v10h-1zM1035 911h1v7h-1zM1036 915h1v11h-1zM1037 904h1v11h-1zM1038 896h1v12h-1zM1039 905h1v8h-1zM1040 904h1v10h-1zM1041 896h1v8h-1zM1042 901h1v11h-1zM1043 912h1v2h-1zM1044 911h1v3h-1zM1045 912h1v12h-1zM1046 915h1v20h-1zM1047 918h1v3h-1zM1048 914h1v7h-1zM1049 921h1v6h-1zM1050 913h1v13h-1zM1051 901h1v17h-1zM1052 908h1v6h-1zM1053 904h1v6h-1zM1054 910h1v10h-1zM1055 915h1v10h-1zM1056 922h1v10h-1zM1057 921h1v15h-1zM1058 913h1v8h-1zM1059 910h1v23h-1zM1060 924h1v7h-1zM1061 908h1v16h-1zM1062 901h1v8h-1zM1063 909h1v19h-1zM1064 909h1v9h-1zM1065 914h1v21h-1zM1066 935h1v6h-1zM1067 922h1v16h-1zM1068 915h1v7h-1zM1069 897h1v18h-1zM1070 900h1v6h-1zM1071 906h1v7h-1zM1072 913h1v7h-1zM1073 917h1v7h-1zM1074 918h1v6h-1zM1075 913h1v7h-1zM1076 914h1v5h-1zM1077 909h1v17h-1zM1078 915h1v18h-1zM1079 903h1v12h-1zM1080 907h1v11h-1zM1081 918h1v7h-1zM1082 913h1v17h-1zM1083 908h1v5h-1zM1084 913h1v5h-1zM1085 915h1v5h-1zM1086 895h1v20h-1zM1087 897h1v3h-1zM1088 894h1v42h-1zM1089 931h1v13h-1zM1090 919h1v12h-1zM1091 920h1v5h-1zM1092 912h1v8h-1zM1093 916h1v4h-1zM1094 891h1v25h-1zM1095 888h1v15h-1zM1096 903h1v42h-1zM1097 937h1v9h-1zM1098 919h1v18h-1zM1099 922h1v6h-1zM1100 903h1v19h-1zM1101 902h1v5h-1zM1102 897h1v21h-1zM1103 918h1v7h-1zM1104 913h1v16h-1zM1105 910h1v7h-1zM1106 917h1v7h-1zM1107 915h1v11h-1zM1108 916h1v13h-1zM1109 903h1v20h-1zM1110 923h1v4h-1zM1111 927h1v7h-1zM1112 934h1v8h-1zM1113 923h1v21h-1zM1114 910h1v13h-1zM1115 912h1v4h-1zM1116 913h1v3h-1zM1117 908h1v11h-1zM1118 913h1v17h-1zM1119 930h1v21h-1zM1120 925h1v18h-1zM1121 914h1v11h-1zM1122 910h1v7h-1zM1123 917h1v7h-1zM1124 914h1v4h-1zM1125 911h1v11h-1zM1126 922h1v6h-1zM1127 913h1v13h-1zM1128 919h1v12h-1zM1129 922h1v15h-1zM1130 928h1v6h-1zM1131 919h1v17h-1zM1132 914h1v5h-1zM1133 911h1v21h-1zM1134 915h1v14h-1zM1135 890h1v25h-1zM1136 902h1v20h-1zM1137 922h1v4h-1zM1138 919h1v10h-1zM1139 911h1v8h-1zM1140 914h1v16h-1zM1141 911h1v9h-1zM1142 917h1v18h-1zM1143 908h1v18h-1zM1144 897h1v17h-1zM1145 906h1v5h-1zM1146 902h1v22h-1zM1147 922h1v9h-1zM1148 911h1v11h-1zM1149 915h1v5h-1zM1150 920h1v14h-1zM1151 927h1v4h-1zM1152 908h1v25h-1zM1153 883h1v25h-1zM1154 895h1v35h-1zM1155 930h1v4h-1zM1156 918h1v14h-1zM1157 911h1v7h-1zM1158 906h1v5h-1zM1159 910h1v8h-1zM1160 918h1v13h-1zM1161 922h1v14h-1zM1162 908h1v15h-1zM1163 919h1v10h-1zM1164 896h1v23h-1zM1165 902h1v12h-1zM1166 892h1v10h-1zM1167 886h1v12h-1zM1168 898h1v6h-1zM1169 904h1v5h-1zM1170 909h1v7h-1zM1171 916h1v15h-1zM1172 918h1v6h-1zM1173 920h1v2h-1zM1174 921h1v1h-1zM1175 911h1v11h-1zM1176 907h1v13h-1zM1177 894h1v26h-1zM1178 920h1v21h-1zM1179 918h1v29h-1zM1180 922h1v3h-1zM1181 898h1v24h-1zM1182 904h1v15h-1zM1183 919h1v11h-1zM1184 919h1v8h-1zM1185 911h1v30h-1zM1186 931h1v12h-1zM1187 915h1v16h-1zM1188 922h1v10h-1zM1189 906h1v16h-1zM1190 911h1v6h-1zM1191 915h1v5h-1zM1192 917h1v8h-1zM1193 897h1v20h-1zM1194 904h1v27h-1zM1195 930h1v1h-1zM1196 903h1v27h-1zM1197 887h1v16h-1zM1198 896h1v27h-1zM1199 923h1v6h-1zM1200 923h1v10h-1zM1201 916h1v7h-1zM1202 916h1v14h-1zM1203 917h1v9h-1zM1204 916h1v19h-1zM1205 907h1v9h-1zM1206 910h1v10h-1zM1207 903h1v7h-1zM1208 905h1v17h-1zM1209 922h1v16h-1zM1210 930h1v16h-1zM1211 926h1v4h-1zM1212 910h1v24h-1zM1213 919h1v14h-1zM1214 922h1v17h-1zM1215 908h1v14h-1zM1216 911h1v17h-1zM1217 915h1v6h-1zM1218 917h1v3h-1zM1219 919h1v2h-1zM1220 921h1v7h-1zM1221 917h1v6h-1zM1222 915h1v13h-1zM1223 891h1v24h-1zM1224 882h1v12h-1zM1225 894h1v33h-1zM1226 922h1v7h-1zM1227 913h1v9h-1zM1228 911h1v2h-1zM1229 912h1v3h-1zM1230 910h1v7h-1zM1231 917h1v32h-1zM1232 900h1v24h-1zM1233 913h1v14h-1zM1234 920h1v4h-1zM1235 924h1v15h-1zM1236 914h1v15h-1zM1237 905h1v9h-1zM1238 911h1v5h-1zM1239 906h1v6h-1zM1240 912h1v6h-1zM1241 889h1v29h-1zM1242 902h1v13h-1zM1243 891h1v17h-1zM1244 905h1v18h-1zM1245 912h1v16h-1zM1246 909h1v7h-1zM1247 916h1v7h-1zM1248 920h1v6h-1zM1249 925h1v5h-1zM1250 913h1v21h-1zM1251 920h1v9h-1zM1252 911h1v9h-1zM1253 917h1v1h-1zM1254 917h1v23h-1zM1255 929h1v6h-1zM1256 921h1v8h-1zM1257 913h1v8h-1zM1258 906h1v23h-1zM1259 929h1v4h-1zM1260 929h1v13h-1zM1261 923h1v14h-1zM1262 901h1v22h-1zM1263 908h1v17h-1zM1264 925h1v16h-1zM1265 910h1v19h-1zM1266 901h1v24h-1zM1267 916h1v10h-1zM1268 907h1v10h-1zM1269 904h1v6h-1zM1270 907h1v8h-1zM1271 901h1v7h-1zM1272 900h1v32h-1zM1273 914h1v19h-1zM1274 895h1v19h-1zM1275 907h1v12h-1zM1276 918h1v11h-1zM1277 921h1v4h-1zM1278 921h1v8h-1zM1279 915h1v13h-1zM1280 902h1v16h-1zM1281 896h1v16h-1zM1282 898h1v7h-1zM1283 901h1v13h-1zM1284 902h1v6h-1zM1285 902h1v18h-1zM1286 920h1v4h-1zM1287 921h1v6h-1zM1288 916h1v5h-1zM1289 904h1v21h-1zM1290 899h1v9h-1zM1291 908h1v22h-1zM1292 902h1v20h-1zM1293 884h1v18h-1zM1294 897h1v16h-1zM1295 913h1v3h-1zM1296 914h1v7h-1zM1297 921h1v8h-1zM1298 927h1v5h-1zM1299 921h1v6h-1zM1300 925h1v8h-1zM1301 933h1v6h-1zM1302 915h1v19h-1zM1303 901h1v16h-1zM1304 910h1v7h-1zM1305 917h1v19h-1zM1306 924h1v6h-1zM1307 912h1v12h-1zM1308 912h1v4h-1zM1309 908h1v9h-1zM1310 917h1v18h-1zM1311 907h1v22h-1zM1312 891h1v39h-1zM1313 923h1v12h-1zM1314 911h1v12h-1zM1315 920h1v16h-1zM1316 936h1v13h-1zM1317 931h1v9h-1zM1318 896h1v35h-1zM1319 880h1v21h-1zM1320 901h1v44h-1zM1321 924h1v17h-1zM1322 911h1v13h-1zM1323 908h1v4h-1zM1324 901h1v11h-1zM1325 912h1v15h-1zM1326 927h1v20h-1zM1327 921h1v13h-1zM1328 923h1v16h-1zM1329 924h1v10h-1zM1330 919h1v5h-1zM1331 921h1v3h-1zM1332 915h1v13h-1zM1333 902h1v13h-1zM1334 904h1v32h-1zM1335 925h1v5h-1zM1336 927h1v13h-1zM1337 908h1v28h-1zM1338 907h1v6h-1zM1339 913h1v7h-1zM1340 920h1v3h-1zM1341 923h1v18h-1zM1342 918h1v11h-1zM1343 902h1v22h-1zM1344 918h1v15h-1zM1345 915h1v19h-1zM1346 913h1v8h-1zM1347 919h1v10h-1zM1348 908h1v11h-1zM1349 899h1v15h-1zM1350 914h1v3h-1zM1351 912h1v5h-1zM1352 910h1v8h-1zM1353 903h1v28h-1zM1354 931h1v11h-1zM1355 918h1v19h-1zM1356 926h1v8h-1zM1357 897h1v31h-1zM1358 904h1v9h-1zM1359 895h1v13h-1zM1360 908h1v6h-1zM1361 914h1v14h-1zM1362 924h1v5h-1zM1363 919h1v8h-1zM1364 913h1v8h-1zM1365 892h1v21h-1zM1366 899h1v13h-1zM1367 899h1v6h-1zM1368 902h1v12h-1zM1369 899h1v10h-1zM1370 893h1v17h-1zM1371 910h1v9h-1zM1372 898h1v26h-1zM1373 902h1v13h-1zM1374 911h1v14h-1zM1375 917h1v9h-1zM1376 926h1v5h-1zM1377 931h1v3h-1zM1378 918h1v17h-1zM1379 910h1v8h-1z"/><path fill="#FF0000" d="M719 147h2v13h-2zM719 160h1v114h-1zM721 160h1v405h-1zM718 274h1v291h-1zM717 565h1v381h-1zM722 565h1v308h-1z"/><path fill="#F4FFD8" d="M719 130h3v1h-3zM718 131h1v1h-1zM722 131h1v1h-1zM717 132h1v1h-1zM723 132h1v1h-1zM717 133h1v1h-1zM723 133h1v1h-1zM717 134h1v1h-1zM723 134h1v1h-1zM716 135h1v1h-1zM724 135h1v1h-1zM716 136h1v1h-1zM724 136h1v1h-1zM716 137h1v1h-1zM724 137h1v1h-1zM716 138h1v1h-1zM724 138h1v1h-1zM716 139h1v1h-1zM724 139h1v1h-1zM716 140h1v1h-1zM724 140h1v1h-1zM716 141h1v1h-1zM724 141h1v1h-1zM717 142h1v1h-1zM723 142h1v1h-1zM717 143h1v1h-1zM723 143h1v1h-1zM717 144h1v1h-1zM723 144h1v1h-1zM718 145h1v1h-1zM722 145h1v1h-1zM719 146h3v1h-3z"/><path fill="#FF00FF" d="M719 131h3v1h-3zM718 132h5v1h-5zM718 133h5v1h-5zM718 134h5v1h-5zM717 135h7v1h-7zM717 136h7v1h-7zM717 137h7v1h-7zM717 138h7v1h-7zM717 139h7v1h-7zM717 140h7v1h-7zM717 141h7v1h-7zM718 142h5v1h-5zM718 143h5v1h-5zM718 144h5v1h-5zM719 145h3v1h-3z"/><path fill="#00FF00" d="M725 115h2v9h-2zM724 116h1v2h-1zM723 117h1v2h-1z"/><path fill="#000000" d="M52 48h1v899h-1zM44 48h8v1h-8zM48 57h4v1h-4zM48 66h4v1h-4zM48 75h4v1h-4zM48 84h4v1h-4zM46 93h6v1h-6zM48 102h4v1h-4zM48 111h4v1h-4zM48 120h4v1h-4zM48 129h4v1h-4zM44 138h8v1h-8zM48 147h4v1h-4zM48 156h4v1h-4zM48 165h4v1h-4zM48 174h4v1h-4zM46 183h6v1h-6zM48 192h4v1h-4zM48 201h4v1h-4zM48 210h4v1h-4zM48 219h4v1h-4zM44 228h8v1h-8zM48 237h4v1h-4zM48 246h4v1h-4zM48 255h4v1h-4zM48 264h4v1h-4zM46 272h6v1h-6zM48 281h4v1h-4zM48 290h4v1h-4zM48 299h4v1h-4zM48 308h4v1h-4zM44 317h8v1h-8zM48 326h4v1h-4zM48 335h4v1h-4zM48 344h4v1h-4zM48 353h4v1h-4zM46 362h6v1h-6zM48 371h4v1h-4zM48 380h4v1h-4zM48 389h4v1h-4zM48 398h4v1h-4zM44 407h8v1h-8zM48 416h4v1h-4zM48 425h4v1h-4zM48 434h4v1h-4zM48 443h4v1h-4zM46 452h6v1h-6zM48 461h4v1h-4zM48 470h4v1h-4zM48 479h4v1h-4zM48 488h4v1h-4zM44 497h8v1h-8zM48 506h4v1h-4zM48 515h4v1h-4zM48 524h4v1h-4zM48 533h4v1h-4zM46 542h6v1h-6zM48 551h4v1h-4zM48 560h4v1h-4zM48 569h4v1h-4zM48 578h4v1h-4zM44 587h8v1h-8zM48 596h4v1h-4zM48 605h4v1h-4zM48 614h4v1h-4zM48 623h4v1h-4zM46 632h6v1h-6zM48 641h4v1h-4zM48 650h4v1h-4zM48 659h4v1h-4zM48 668h4v1h-4zM44 677h8v1h-8zM48 686h4v1h-4zM48 695h4v1h-4zM48 704h4v1h-4zM48 713h4v1h-4zM46 722h6v1h-6zM48 730h4v1h-4zM48 739h4v1h-4zM48 748h4v1h-4zM48 757h4v1h-4zM44 766h8v1h-8zM48 775h4v1h-4zM48 784h4v1h-4zM48 793h4v1h-4zM48 802h4v1h-4zM46 811h6v1h-6zM48 820h4v1h-4zM48 829h4v1h-4zM48 838h4v1h-4zM48 847h4v1h-4zM44 856h8v1h-8zM48 865h4v1h-4zM48 874h4v1h-4zM48 883h4v1h-4zM48 892h4v1h-4zM46 901h6v1h-6zM48 910h4v1h-4zM48 919h4v1h-4zM48 928h4v1h-4zM48 937h4v1h-4zM44 946h8v1h-8z"/><text x="21" y="54" textLength="17.04" lengthAdjust="spacingAndGlyphs" fill="#000">-20</text><text x="21" y="143" textLength="17.04" lengthAdjust="spacingAndGlyphs" fill="#000">-30</text><text x="21" y="233" textLength="17.04" lengthAdjust="spacingAndGlyphs" fill="#000">-40</text><text x="21" y="323" textLength="17.04" lengthAdjust="spacingAndGlyphs" fill="#000">-50</text><text x="21" y="413" textLength="17.04" lengthAdjust="spacingAndGlyphs" fill="#000">-60</text><text x="21" y="503" textLength="17.04" lengthAdjust="spacingAndGlyphs" fill="#000">-70</text><text x="21" y="592" textLength="17.04" lengthAdjust="spacingAndGlyphs" fill="#000">-80</text><text x="21" y="682" textLength="17.04" lengthAdjust="spacingAndGlyphs" fill="#000">-90</text><text x="14" y="772" textLength="23.88" lengthAdjust="spacingAndGlyphs" fill="#000">-100</text><text x="14" y="862" textLength="23.87" lengthAdjust="spacingAndGlyphs" fill="#000">-110</text><text x="14" y="952" textLength="23.88" lengthAdjust="spacingAndGlyphs" fill="#000">-120</text></svg><svg width="1430" height="995" viewBox="0 0 1430 995"><text x="28" y="28" textLength="26.66" lengthAdjust="spacingAndGlyphs" fill="#000">dBm</text><text x="83" y="30" textLength="185.08" lengthAdjust="spacingAndGlyphs" fill="#000">Frequency span: 2.000000 MHz</text><text x="300" y="30" textLength="162.15" lengthAdjust="spacingAndGlyphs" fill="#000">Frequency resolution: 1 kHz</text><text x="772" y="30" textLength="125.2" lengthAdjust="spacingAndGlyphs" fill="#000">Analysis&#160; Time:&#160; 9 ms</text><text x="1170" y="30" textLength="120.94" lengthAdjust="spacingAndGlyphs" fill="#000">Scale max: -20 dBm</text><text x="1302" y="30" textLength="9.36" lengthAdjust="spacingAndGlyphs" fill="#000">&#916;</text><text x="1315" y="30" textLength="73.04" lengthAdjust="spacingAndGlyphs" fill="#000">scale: 10 dB</text><text x="70" y="975" textLength="192.87" lengthAdjust="spacingAndGlyphs" fill="#000">Frequency min: 999.000000 MHz</text><text x="620" y="975" textLength="214.99" lengthAdjust="spacingAndGlyphs" fill="#000">Frequency center: 1000.000000 MHz</text><text x="1186" y="975" textLength="204.51" lengthAdjust="spacingAndGlyphs" fill="#000">Frequency max: 1001.000000 MHz</text></svg></body></html>
